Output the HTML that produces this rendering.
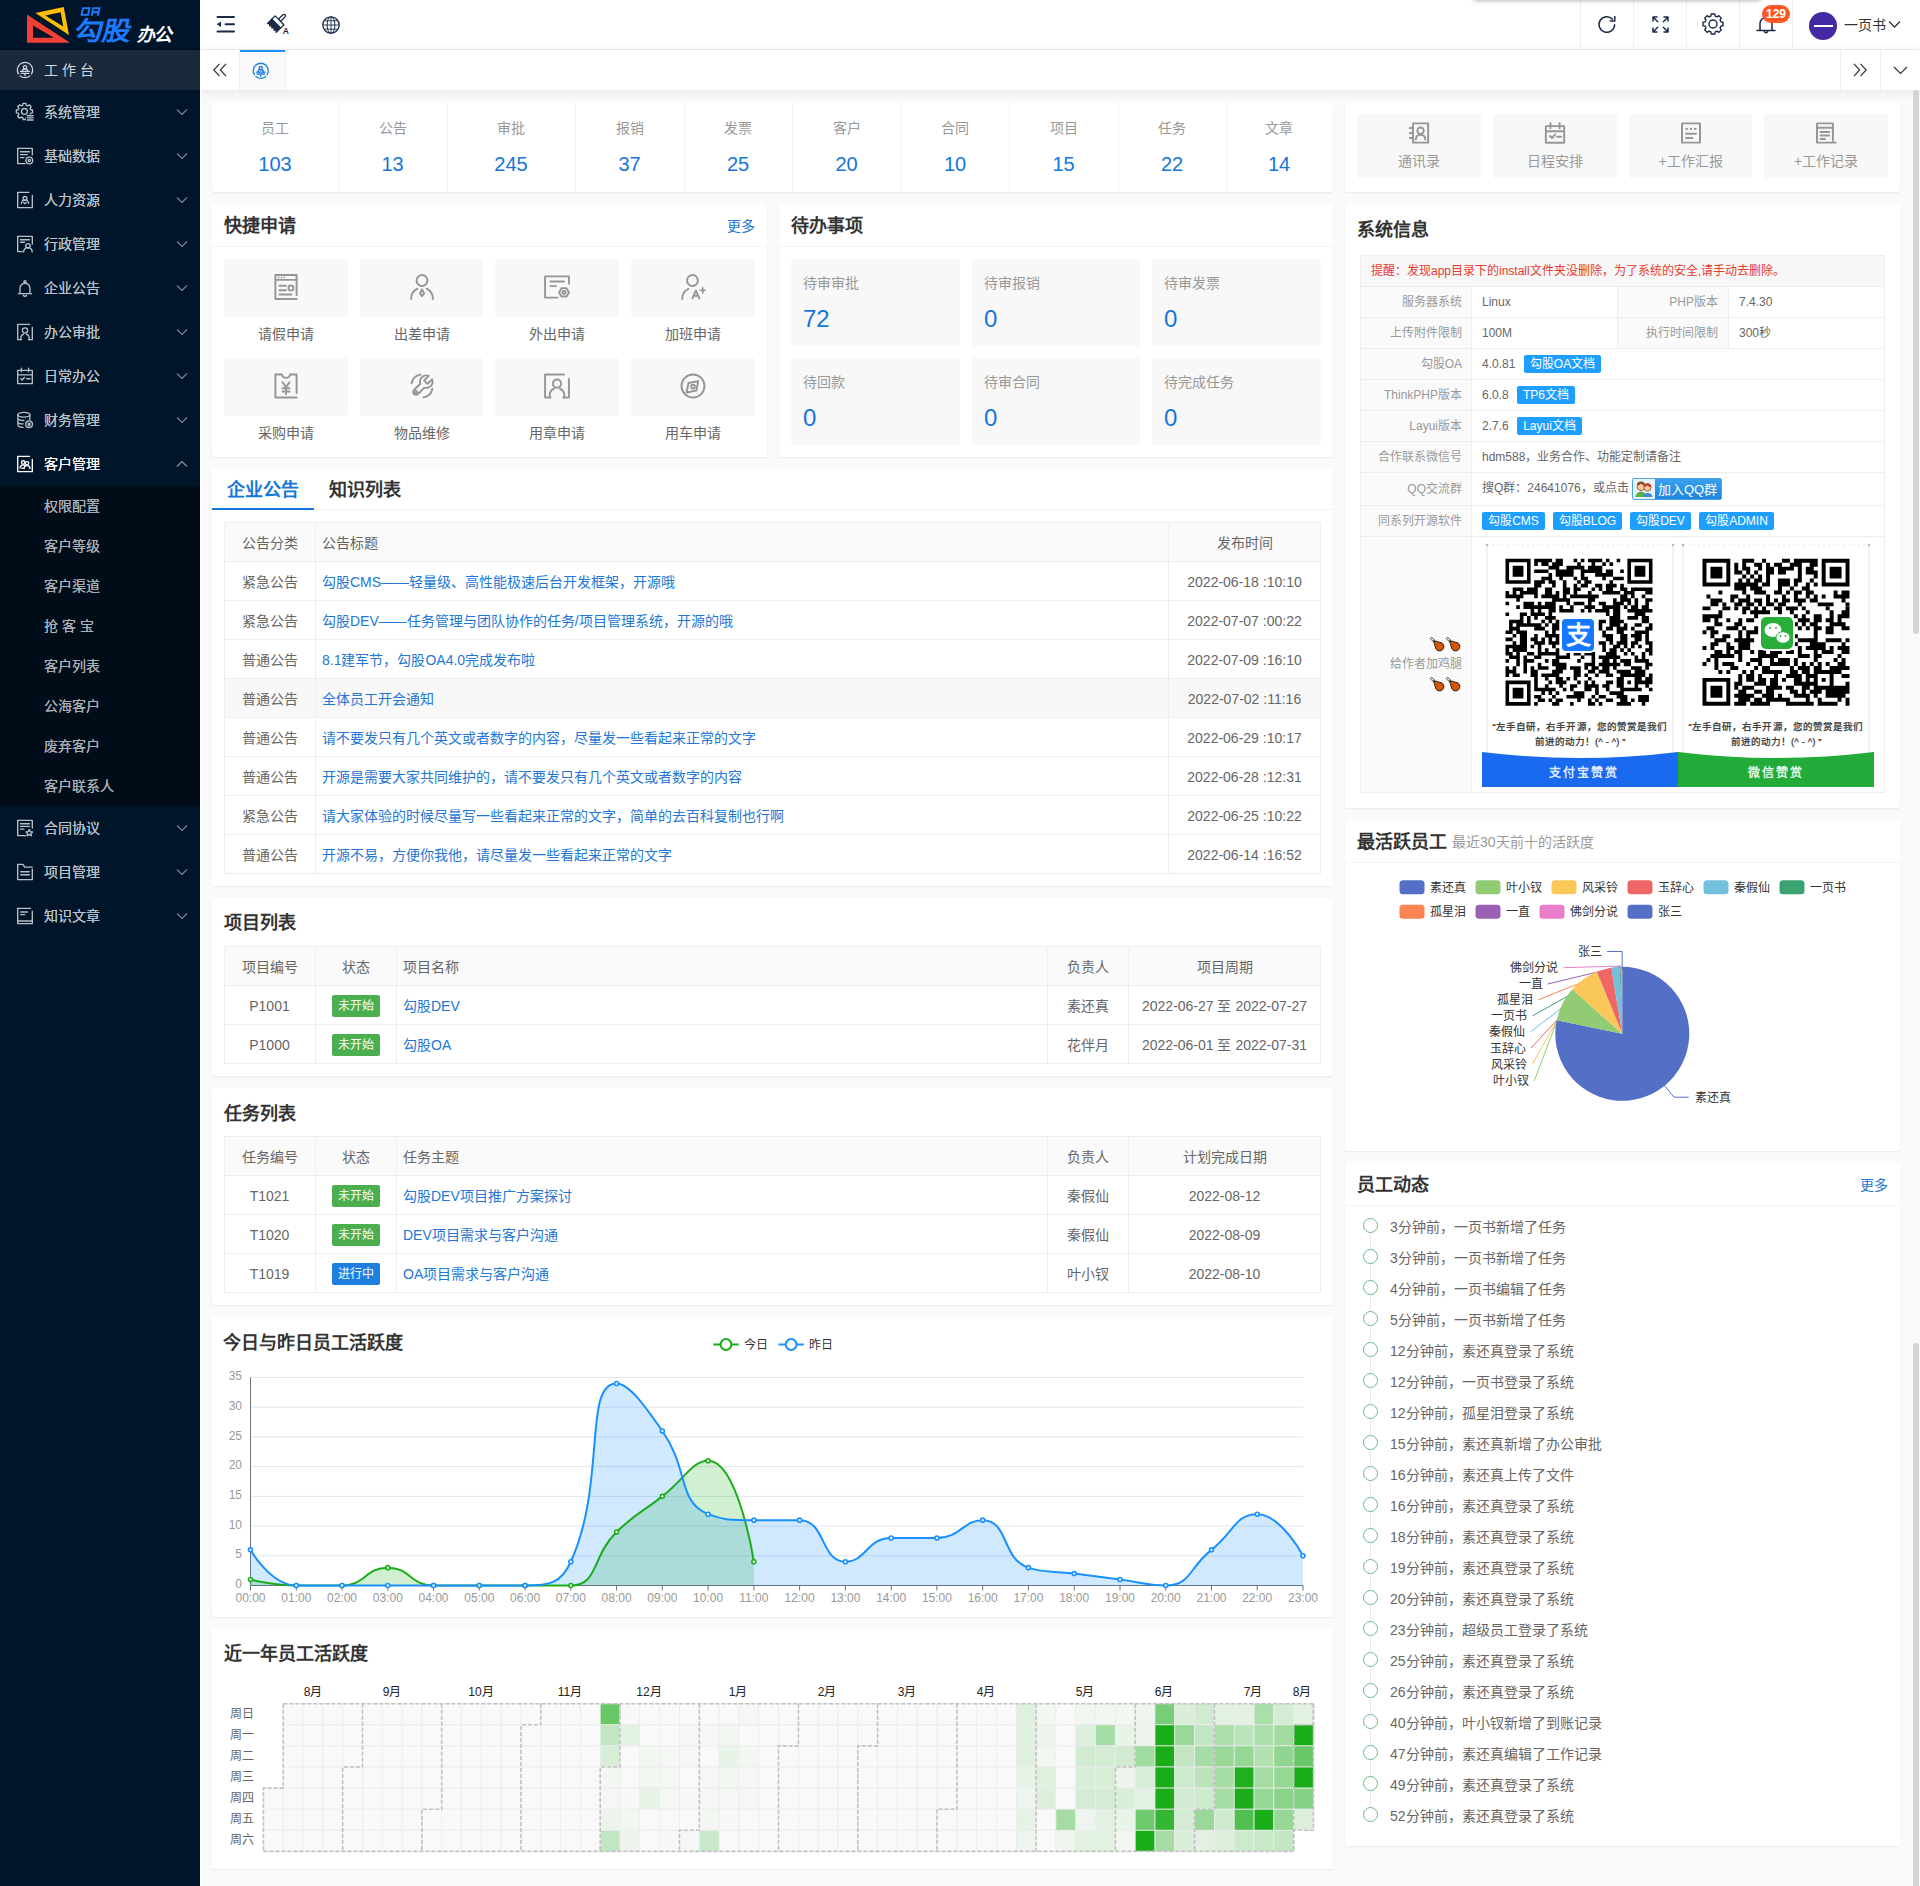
<!DOCTYPE html>
<html lang="zh-CN"><head><meta charset="utf-8"><title>勾股OA</title><style>
*{box-sizing:border-box;margin:0;padding:0}
html,body{width:1920px;height:1886px;overflow:hidden}
body{font-family:"Liberation Sans",sans-serif;font-size:14px;color:#666;background:#fafafa;position:relative}
.a{position:absolute}
.t{position:absolute;white-space:nowrap}
.card{position:absolute;background:#fff;border-radius:2px;box-shadow:0 1px 2px 0 rgba(0,0,30,.07)}
svg{position:absolute;overflow:visible}
.tb{position:absolute;border:1px solid #eee;background:#fff}
.hl{position:absolute;height:1px;background:#eee}
.vl{position:absolute;width:1px;background:#eee}
.badge{position:absolute;color:#fff;font-size:12px;border-radius:2px;text-align:center;white-space:nowrap}
</style></head><body>
<div class="a" style="left:0px;top:0px;width:200px;height:1886px;background:#001529;"></div>
<svg style="left:0;top:0" width="200" height="50" viewBox="0 0 200 50">
<path d="M27 14.600V42.700H70Z M33 25.500L54 37.700H33Z" fill="#f04134" fill-rule="evenodd"/>
<path d="M35.400 13L63.700 7L69 35Z M45.300 15.600L60.700 12.300L63.200 26.500Z" fill="#ffbf00" fill-rule="evenodd"/>
</svg>
<svg style="left:0;top:0" width="200" height="50" viewBox="0 0 200 50" fill="none" stroke="#1e7bff" stroke-width="1.900"><g transform="skewX(-12)"><path d="M84.800 8.100h6.400v6.800h-6.400z"/><path d="M95 15.800v-7.700h6.200v7.700M95 12.300h6.200"/></g></svg>
<div class="t" style="left:75px;top:15px;font-size:26px;line-height:32px;color:#1e7bff;font-weight:bold;transform:skewX(-12deg) scaleX(1.1);transform-origin:left center;letter-spacing:-1px">勾股</div>
<div class="t" style="left:138px;top:24px;font-size:18px;line-height:22px;color:#fff;font-weight:bold;transform:skewX(-12deg);letter-spacing:-1px">办公</div>
<div class="a" style="left:0px;top:49px;width:200px;height:1px;background:rgba(0,0,0,.25);"></div>
<div class="a" style="left:0px;top:50px;width:200px;height:40px;background:#1a2a3c;"></div>
<svg style="left:16px;top:61px;color:#d0d5db" width="18" height="18" viewBox="0 0 16 16" fill="none" stroke="currentColor" stroke-width="1.1" stroke-linecap="round" stroke-linejoin="round" ><path d="M2.2 11.5A6.8 6.8 0 1 1 13.8 11.5"/><path d="M3.6 13.2A6.8 6.8 0 0 0 12.4 13.2"/><circle cx="8" cy="5.6" r="1.5"/><path d="M5.6 9.3a2.4 2.4 0 0 1 4.8 0"/><path d="M4 9.3h8M4.6 11h6.8M8 11v2"/></svg>
<div class="t" style="left:44px;top:59.0px;height:22px;line-height:22px;font-size:14px;color:#d3d8de;">工 作 台</div>
<svg style="left:16px;top:103px;color:#b9c0c9" width="18" height="18" viewBox="0 0 16 16" fill="none" stroke="currentColor" stroke-width="1.2" stroke-linecap="round" stroke-linejoin="round" ><path d="M12.99 5.98L14.69 6.24L14.69 8.76L12.99 9.02L12.46 10.31L13.47 11.70L11.70 13.47L10.31 12.46L9.02 12.99L8.76 14.69L6.24 14.69L5.98 12.99L4.69 12.46L3.30 13.47L1.53 11.70L2.54 10.31L2.01 9.02L0.31 8.76L0.31 6.24L2.01 5.98L2.54 4.69L1.53 3.30L3.30 1.53L4.69 2.54L5.98 2.01L6.24 0.31L8.76 0.31L9.02 2.01L10.31 2.54L11.70 1.53L13.47 3.30L12.46 4.69Z"/><rect x="8.700" y="10.100" width="8" height="7" fill="#001529" stroke="none"/><circle cx="7.500" cy="7.500" r="2.600"/><path d="M10 11.300h5.200M10 13.200h5.200M10 15.100h5.200"/></svg>
<div class="t" style="left:44px;top:101.0px;height:22px;line-height:22px;font-size:14px;color:#b9c0c9;text-shadow:0 0 .4px #b9c0c9;">系统管理</div>
<svg style="left:176px;top:108px" width="12" height="8" viewBox="0 0 12 8" fill="none" stroke="#7d8999" stroke-width="1.1"><path d="M1 1.500L6 6.500L11 1.500"/></svg>
<svg style="left:16px;top:147px;color:#b9c0c9" width="18" height="18" viewBox="0 0 16 16" fill="none" stroke="currentColor" stroke-width="1.2" stroke-linecap="round" stroke-linejoin="round" ><path d="M14.500 7V1.200h-13v13.600h6.500"/><path d="M4 4.200h8M4 6.800h6M4 9.400h3"/><circle cx="11.800" cy="12" r="3"/><circle cx="11.800" cy="12" r="1"/></svg>
<div class="t" style="left:44px;top:145.0px;height:22px;line-height:22px;font-size:14px;color:#b9c0c9;text-shadow:0 0 .4px #b9c0c9;">基础数据</div>
<svg style="left:176px;top:152px" width="12" height="8" viewBox="0 0 12 8" fill="none" stroke="#7d8999" stroke-width="1.1"><path d="M1 1.500L6 6.500L11 1.500"/></svg>
<svg style="left:16px;top:191px;color:#b9c0c9" width="18" height="18" viewBox="0 0 16 16" fill="none" stroke="currentColor" stroke-width="1.2" stroke-linecap="round" stroke-linejoin="round" ><path d="M11.500 1.200h-10v13.600h13V4"/><circle cx="8" cy="6.600" r="1.700"/><path d="M4.800 11.200a3.200 3.200 0 0 1 6.400 0M6.800 10.300l1.200 1 1.200-1"/></svg>
<div class="t" style="left:44px;top:189.0px;height:22px;line-height:22px;font-size:14px;color:#b9c0c9;text-shadow:0 0 .4px #b9c0c9;">人力资源</div>
<svg style="left:176px;top:196px" width="12" height="8" viewBox="0 0 12 8" fill="none" stroke="#7d8999" stroke-width="1.1"><path d="M1 1.500L6 6.500L11 1.500"/></svg>
<svg style="left:16px;top:235px;color:#b9c0c9" width="18" height="18" viewBox="0 0 16 16" fill="none" stroke="currentColor" stroke-width="1.2" stroke-linecap="round" stroke-linejoin="round" ><path d="M5.500 14.800h-4V1.200h13V8"/><path d="M4 4.200h8M4 6.400h3.500"/><circle cx="10.600" cy="9.600" r="2"/><path d="M6.800 15a3.800 3.800 0 0 1 7.600 0"/></svg>
<div class="t" style="left:44px;top:233.0px;height:22px;line-height:22px;font-size:14px;color:#b9c0c9;text-shadow:0 0 .4px #b9c0c9;">行政管理</div>
<svg style="left:176px;top:240px" width="12" height="8" viewBox="0 0 12 8" fill="none" stroke="#7d8999" stroke-width="1.1"><path d="M1 1.500L6 6.500L11 1.500"/></svg>
<svg style="left:16px;top:279px;color:#b9c0c9" width="18" height="18" viewBox="0 0 16 16" fill="none" stroke="currentColor" stroke-width="1.2" stroke-linecap="round" stroke-linejoin="round" ><path d="M2.200 13h11.600M3.600 13V8.200a4.400 4.400 0 0 1 8.800 0V13"/><circle cx="8" cy="2.400" r="1"/><path d="M6.600 14.400a1.500 1.500 0 0 0 2.800 0"/></svg>
<div class="t" style="left:44px;top:277.0px;height:22px;line-height:22px;font-size:14px;color:#b9c0c9;text-shadow:0 0 .4px #b9c0c9;">企业公告</div>
<svg style="left:176px;top:284px" width="12" height="8" viewBox="0 0 12 8" fill="none" stroke="#7d8999" stroke-width="1.1"><path d="M1 1.500L6 6.500L11 1.500"/></svg>
<svg style="left:16px;top:323px;color:#b9c0c9" width="18" height="18" viewBox="0 0 16 16" fill="none" stroke="currentColor" stroke-width="1.2" stroke-linecap="round" stroke-linejoin="round" ><path d="M14.500 4v10.800h-3.200M4.700 14.800h-3.200V1.200h10.500"/><circle cx="8" cy="6.600" r="2.300"/><path d="M4.600 14.800a3.500 3.500 0 0 1 2-4.800M11.400 14.800a3.500 3.500 0 0 0-2-4.800"/></svg>
<div class="t" style="left:44px;top:321.0px;height:22px;line-height:22px;font-size:14px;color:#b9c0c9;text-shadow:0 0 .4px #b9c0c9;">办公审批</div>
<svg style="left:176px;top:328px" width="12" height="8" viewBox="0 0 12 8" fill="none" stroke="#7d8999" stroke-width="1.1"><path d="M1 1.500L6 6.500L11 1.500"/></svg>
<svg style="left:16px;top:367px;color:#b9c0c9" width="18" height="18" viewBox="0 0 16 16" fill="none" stroke="currentColor" stroke-width="1.2" stroke-linecap="round" stroke-linejoin="round" ><path d="M1.500 3h13v11.800h-13zM1.500 7h13M4.800 1v3.200M11.200 1v3.200"/><path d="M4.200 10.400l1.300 1.200 2-2.200M9.500 10.400h3"/></svg>
<div class="t" style="left:44px;top:365.0px;height:22px;line-height:22px;font-size:14px;color:#b9c0c9;text-shadow:0 0 .4px #b9c0c9;">日常办公</div>
<svg style="left:176px;top:372px" width="12" height="8" viewBox="0 0 12 8" fill="none" stroke="#7d8999" stroke-width="1.1"><path d="M1 1.500L6 6.500L11 1.500"/></svg>
<svg style="left:16px;top:411px;color:#b9c0c9" width="18" height="18" viewBox="0 0 16 16" fill="none" stroke="currentColor" stroke-width="1.2" stroke-linecap="round" stroke-linejoin="round" ><ellipse cx="7" cy="3.300" rx="5.300" ry="2.100"/><path d="M1.700 3.300v9.200c0 1.100 2 2 4.600 2.100M12.300 3.300v4.200M1.700 6.400c0 1.100 2.300 2 5.300 2M1.700 9.500c0 1.100 2 2 4.600 2"/><circle cx="11.600" cy="11.800" r="3"/><path d="M10.600 10.600l1 1.200 1-1.200M11.600 11.800v1.600M10.600 12.400h2"/></svg>
<div class="t" style="left:44px;top:409.0px;height:22px;line-height:22px;font-size:14px;color:#b9c0c9;text-shadow:0 0 .4px #b9c0c9;">财务管理</div>
<svg style="left:176px;top:416px" width="12" height="8" viewBox="0 0 12 8" fill="none" stroke="#7d8999" stroke-width="1.1"><path d="M1 1.500L6 6.500L11 1.500"/></svg>
<svg style="left:16px;top:455px;color:#ffffff" width="18" height="18" viewBox="0 0 16 16" fill="none" stroke="currentColor" stroke-width="1.2" stroke-linecap="round" stroke-linejoin="round" ><path d="M12 1.200h-10.500v13.600h13V4"/><circle cx="6.400" cy="6.600" r="1.500"/><circle cx="9.800" cy="7.400" r="1.500"/><path d="M3.600 11.600a2.800 2.800 0 0 1 4.200-2.400M7.200 12a2.600 2.600 0 0 1 5.200 0M5 11.600h1.200"/></svg>
<div class="t" style="left:44px;top:453.0px;height:22px;line-height:22px;font-size:14px;color:#ffffff;text-shadow:0 0 .4px #ffffff;">客户管理</div>
<svg style="left:176px;top:460px" width="12" height="8" viewBox="0 0 12 8" fill="none" stroke="#8a96a5" stroke-width="1.1"><path d="M1 6.500L6 1.500L11 6.500"/></svg>
<svg style="left:16px;top:819px;color:#b9c0c9" width="18" height="18" viewBox="0 0 16 16" fill="none" stroke="currentColor" stroke-width="1.2" stroke-linecap="round" stroke-linejoin="round" ><path d="M8.500 14.800h-7V1.200h13V8"/><path d="M4 4.200h8M4 6.600h8M4 9h3"/><path d="M11.800 9.400l.9 1.800 2 .3-1.450 1.400.35 2-1.800-.95-1.800.95.350-2-1.450-1.400 2-.3z"/></svg>
<div class="t" style="left:44px;top:817.0px;height:22px;line-height:22px;font-size:14px;color:#b9c0c9;text-shadow:0 0 .4px #b9c0c9;">合同协议</div>
<svg style="left:176px;top:824px" width="12" height="8" viewBox="0 0 12 8" fill="none" stroke="#7d8999" stroke-width="1.1"><path d="M1 1.500L6 6.500L11 1.500"/></svg>
<svg style="left:16px;top:863px;color:#b9c0c9" width="18" height="18" viewBox="0 0 16 16" fill="none" stroke="currentColor" stroke-width="1.2" stroke-linecap="round" stroke-linejoin="round" ><path d="M14.500 5.400v9.400h-13V1.200h4.600l1.700 2.400h6.700"/><path d="M4.200 7.800h7.600M4.200 10.400h7.600"/></svg>
<div class="t" style="left:44px;top:861.0px;height:22px;line-height:22px;font-size:14px;color:#b9c0c9;text-shadow:0 0 .4px #b9c0c9;">项目管理</div>
<svg style="left:176px;top:868px" width="12" height="8" viewBox="0 0 12 8" fill="none" stroke="#7d8999" stroke-width="1.1"><path d="M1 1.500L6 6.500L11 1.500"/></svg>
<svg style="left:16px;top:907px;color:#b9c0c9" width="18" height="18" viewBox="0 0 16 16" fill="none" stroke="currentColor" stroke-width="1.2" stroke-linecap="round" stroke-linejoin="round" ><path d="M14.500 3.800v11h-13V1.200h11.500"/><path d="M4.200 4.400h6M4.200 6.800h3.500M1.500 12.400h13"/></svg>
<div class="t" style="left:44px;top:905.0px;height:22px;line-height:22px;font-size:14px;color:#b9c0c9;text-shadow:0 0 .4px #b9c0c9;">知识文章</div>
<svg style="left:176px;top:912px" width="12" height="8" viewBox="0 0 12 8" fill="none" stroke="#7d8999" stroke-width="1.1"><path d="M1 1.500L6 6.500L11 1.500"/></svg>
<div class="a" style="left:0px;top:486px;width:200px;height:320px;background:#000c17;"></div>
<div class="t" style="left:44px;top:495.0px;height:22px;line-height:22px;font-size:14px;color:#a9b0b9;text-shadow:0 0 .6px #a9b0b9;">权限配置</div>
<div class="t" style="left:44px;top:535.0px;height:22px;line-height:22px;font-size:14px;color:#a9b0b9;text-shadow:0 0 .6px #a9b0b9;">客户等级</div>
<div class="t" style="left:44px;top:575.0px;height:22px;line-height:22px;font-size:14px;color:#a9b0b9;text-shadow:0 0 .6px #a9b0b9;">客户渠道</div>
<div class="t" style="left:44px;top:615.0px;height:22px;line-height:22px;font-size:14px;color:#a9b0b9;text-shadow:0 0 .6px #a9b0b9;">抢 客 宝</div>
<div class="t" style="left:44px;top:655.0px;height:22px;line-height:22px;font-size:14px;color:#a9b0b9;text-shadow:0 0 .6px #a9b0b9;">客户列表</div>
<div class="t" style="left:44px;top:695.0px;height:22px;line-height:22px;font-size:14px;color:#a9b0b9;text-shadow:0 0 .6px #a9b0b9;">公海客户</div>
<div class="t" style="left:44px;top:735.0px;height:22px;line-height:22px;font-size:14px;color:#a9b0b9;text-shadow:0 0 .6px #a9b0b9;">废弃客户</div>
<div class="t" style="left:44px;top:775.0px;height:22px;line-height:22px;font-size:14px;color:#a9b0b9;text-shadow:0 0 .6px #a9b0b9;">客户联系人</div>
<div class="a" style="left:200px;top:0px;width:1720px;height:50px;background:#fff;border-bottom:1px solid #eee;"></div>
<svg style="left:216px;top:15px" width="20" height="19" viewBox="0 0 20 19" fill="#1b2a47" stroke="none">
<rect x="0.500" y="1" width="18.500" height="2" rx="1"/><rect x="8.600" y="8.300" width="10.400" height="2" rx="1"/><rect x="0.500" y="15.400" width="18.500" height="2" rx="1"/><path d="M0.600 9.300L5 6.600V12Z"/></svg>
<svg style="left:0;top:0" width="300" height="50" viewBox="0 0 300 50" fill="none" stroke="#1b2a47" stroke-width="1.300" stroke-linejoin="round">
<g transform="translate(284.600,15.200) rotate(45)"><rect x="-1.500" y="-0.600" width="3" height="8" rx="1.500" fill="#fff"/><rect x="-6.200" y="7.200" width="12.400" height="4.800" fill="#fff"/><path d="M-6.200 12h12.400v6l-1.550-1.500-1.550 1.500-1.550-1.500-1.550 1.500-1.550-1.500-1.550 1.500-1.550-1.500-1.550 1.500z" fill="#1b2a47"/></g>
<text x="282.800" y="33.800" font-family="Liberation Sans, sans-serif" font-size="8.500" font-weight="bold" fill="#1b2a47" stroke="none">A</text></svg>
<svg style="left:322px;top:15.500px" width="18" height="18" viewBox="0 0 18 18" fill="none" stroke="#1b2a47" stroke-width="1">
<circle cx="9" cy="9" r="8.200" stroke-width="1.300"/><ellipse cx="9" cy="9" rx="3.900" ry="8.200"/><path d="M0.800 9h16.400M9 0.800v16.400M2.400 4.800h13.200M2.400 13.200h13.200" stroke-width=".9"/></svg>
<div class="vl" style="left:1580px;top:0;height:49px;background:#f0f0f0"></div>
<div class="vl" style="left:1633px;top:0;height:49px;background:#f0f0f0"></div>
<div class="vl" style="left:1686px;top:0;height:49px;background:#f0f0f0"></div>
<div class="vl" style="left:1739px;top:0;height:49px;background:#f0f0f0"></div>
<div class="vl" style="left:1792px;top:0;height:49px;background:#f0f0f0"></div>
<svg style="left:1597px;top:14px" width="20" height="20" viewBox="0 0 20 20" fill="none" stroke="#1b2a47" stroke-width="1.500" stroke-linecap="round" stroke-linejoin="round">
<path d="M17.600 10.800A7.800 7.800 0 1 1 15.400 5.100"/><path d="M17.800 2.400v4.600h-4.600"/></svg>
<svg style="left:1652px;top:16px" width="17" height="17" viewBox="0 0 17 17" fill="none" stroke="#1b2a47" stroke-width="1.500" stroke-linecap="round" stroke-linejoin="round">
<path d="M1 5V1h4M1.500 1.500l4.200 4.200M12 1h4v4M15.500 1.500l-4.200 4.200M1 12v4h4M1.500 15.500l4.200-4.200M16 12v4h-4M15.500 15.500l-4.200-4.200"/></svg>
<svg style="left:1702px;top:13.400px" width="22" height="22" viewBox="0 0 22 22" fill="none" stroke="#1b2a47" stroke-width="1.400" stroke-linejoin="round">
<path d="M18.81 8.84L21.05 9.25L21.05 12.75L18.81 13.16L18.05 14.99L19.35 16.87L16.87 19.35L14.99 18.05L13.16 18.81L12.75 21.05L9.25 21.05L8.84 18.81L7.01 18.05L5.13 19.35L2.65 16.87L3.95 14.99L3.19 13.16L0.95 12.75L0.95 9.25L3.19 8.84L3.95 7.01L2.65 5.13L5.13 2.65L7.01 3.95L8.84 3.19L9.25 0.95L12.75 0.95L13.16 3.19L14.99 3.95L16.87 2.65L19.35 5.13L18.05 7.01Z"/><circle cx="11" cy="11" r="4"/></svg>
<svg style="left:1756px;top:14px" width="20" height="21" viewBox="0 0 20 21" fill="none" stroke="#1b2a47" stroke-width="1.500" stroke-linecap="round">
<path d="M1 16.500h18M4 16.500V9.500a6 6 0 0 1 12 0V16.500"/><path d="M8.400 17.500a1.700 1.700 0 0 0 3.200 0"/></svg>
<div class="badge" style="left:1762px;top:5px;width:28px;height:18px;line-height:18px;background:#ff5722;border-radius:9px;font-weight:bold">129</div>
<div class="a" style="left:1809px;top:12px;width:28px;height:28px;border-radius:50%;background:#4528a4"></div>
<div class="a" style="left:1814px;top:25px;width:19px;height:1.6px;background:#fff;"></div>
<div class="t" style="left:1844px;top:13.5px;height:22px;line-height:22px;font-size:14px;color:#333;">一页书</div>
<svg style="left:1888px;top:20px" width="13" height="9" viewBox="0 0 13 9" fill="none" stroke="#333" stroke-width="1.300"><path d="M1 1.500L6.500 7L12 1.500"/></svg>
<div class="a" style="left:1474px;top:-21px;width:286px;height:20px;background:#fff;box-shadow:0 1px 5px rgba(0,0,0,.4)"></div>
<div class="a" style="left:200px;top:50px;width:1720px;height:40px;background:#fff;box-shadow:0 2px 9px rgba(0,0,0,.09);"></div>
<svg style="left:213px;top:63px" width="14" height="14" viewBox="0 0 14 14" fill="none" stroke="#333" stroke-width="1.200"><path d="M6.500 0.800L0.800 7L6.500 13.200M13 0.800L7.300 7L13 13.200"/></svg>
<div class="a" style="left:239px;top:50px;width:47px;height:40px;background:#fafafa;border-left:1px solid #eee;border-right:1px solid #eee;"></div>
<div class="a" style="left:240px;top:50px;width:45px;height:2px;background:#1890ff;"></div>
<svg style="left:252px;top:61.5px;color:#1e7fe0" width="17.5" height="17.5" viewBox="0 0 16 16" fill="none" stroke="currentColor" stroke-width="1.25" stroke-linecap="round" stroke-linejoin="round" ><path d="M2.2 11.5A6.8 6.8 0 1 1 13.8 11.5"/><path d="M3.6 13.2A6.8 6.8 0 0 0 12.4 13.2"/><circle cx="8" cy="5.6" r="1.5"/><path d="M5.6 9.3a2.4 2.4 0 0 1 4.8 0"/><path d="M4 9.3h8M4.6 11h6.8M8 11v2"/></svg>
<div class="vl" style="left:1840px;top:50px;height:40px;background:#eee"></div>
<div class="vl" style="left:1880px;top:50px;height:40px;background:#eee"></div>
<svg style="left:1853px;top:63px" width="14" height="14" viewBox="0 0 14 14" fill="none" stroke="#333" stroke-width="1.200"><path d="M1 0.800L6.700 7L1 13.200M7.500 0.800L13.200 7L7.500 13.200"/></svg>
<svg style="left:1893px;top:66px" width="15" height="9" viewBox="0 0 15 9" fill="none" stroke="#333" stroke-width="1.200"><path d="M1 1L7.500 7.500L14 1"/></svg>
<div class="a" style="left:200px;top:90px;width:1px;height:1796px;background:#fff;"></div>
<div class="a" style="left:1913px;top:90px;width:6px;height:544px;background:#d4d4d4;border-radius:3px;"></div>
<div class="a" style="left:1913px;top:1343px;width:6px;height:560px;background:#d4d4d4;border-radius:3px;"></div>
<div class="card" style="left:212px;top:102px;width:1121px;height:90px"></div>
<div class="t" style="left:212px;top:117.0px;height:22px;line-height:22px;font-size:14px;color:#999;width:126px;text-align:center;">员工</div>
<div class="t" style="left:212px;top:150.5px;height:26px;line-height:26px;font-size:20px;color:#1476d9;width:126px;text-align:center;">103</div>
<div class="vl" style="left:338px;top:102px;height:90px;background:#f2f2f2"></div>
<div class="t" style="left:338px;top:117.0px;height:22px;line-height:22px;font-size:14px;color:#999;width:109px;text-align:center;">公告</div>
<div class="t" style="left:338px;top:150.5px;height:26px;line-height:26px;font-size:20px;color:#1476d9;width:109px;text-align:center;">13</div>
<div class="vl" style="left:447px;top:102px;height:90px;background:#f2f2f2"></div>
<div class="t" style="left:447px;top:117.0px;height:22px;line-height:22px;font-size:14px;color:#999;width:128px;text-align:center;">审批</div>
<div class="t" style="left:447px;top:150.5px;height:26px;line-height:26px;font-size:20px;color:#1476d9;width:128px;text-align:center;">245</div>
<div class="vl" style="left:575px;top:102px;height:90px;background:#f2f2f2"></div>
<div class="t" style="left:575px;top:117.0px;height:22px;line-height:22px;font-size:14px;color:#999;width:109px;text-align:center;">报销</div>
<div class="t" style="left:575px;top:150.5px;height:26px;line-height:26px;font-size:20px;color:#1476d9;width:109px;text-align:center;">37</div>
<div class="vl" style="left:684px;top:102px;height:90px;background:#f2f2f2"></div>
<div class="t" style="left:684px;top:117.0px;height:22px;line-height:22px;font-size:14px;color:#999;width:108px;text-align:center;">发票</div>
<div class="t" style="left:684px;top:150.5px;height:26px;line-height:26px;font-size:20px;color:#1476d9;width:108px;text-align:center;">25</div>
<div class="vl" style="left:792px;top:102px;height:90px;background:#f2f2f2"></div>
<div class="t" style="left:792px;top:117.0px;height:22px;line-height:22px;font-size:14px;color:#999;width:109px;text-align:center;">客户</div>
<div class="t" style="left:792px;top:150.5px;height:26px;line-height:26px;font-size:20px;color:#1476d9;width:109px;text-align:center;">20</div>
<div class="vl" style="left:901px;top:102px;height:90px;background:#f2f2f2"></div>
<div class="t" style="left:901px;top:117.0px;height:22px;line-height:22px;font-size:14px;color:#999;width:108px;text-align:center;">合同</div>
<div class="t" style="left:901px;top:150.5px;height:26px;line-height:26px;font-size:20px;color:#1476d9;width:108px;text-align:center;">10</div>
<div class="vl" style="left:1009px;top:102px;height:90px;background:#f2f2f2"></div>
<div class="t" style="left:1009px;top:117.0px;height:22px;line-height:22px;font-size:14px;color:#999;width:109px;text-align:center;">项目</div>
<div class="t" style="left:1009px;top:150.5px;height:26px;line-height:26px;font-size:20px;color:#1476d9;width:109px;text-align:center;">15</div>
<div class="vl" style="left:1118px;top:102px;height:90px;background:#f2f2f2"></div>
<div class="t" style="left:1118px;top:117.0px;height:22px;line-height:22px;font-size:14px;color:#999;width:108px;text-align:center;">任务</div>
<div class="t" style="left:1118px;top:150.5px;height:26px;line-height:26px;font-size:20px;color:#1476d9;width:108px;text-align:center;">22</div>
<div class="vl" style="left:1226px;top:102px;height:90px;background:#f2f2f2"></div>
<div class="t" style="left:1226px;top:117.0px;height:22px;line-height:22px;font-size:14px;color:#999;width:106px;text-align:center;">文章</div>
<div class="t" style="left:1226px;top:150.5px;height:26px;line-height:26px;font-size:20px;color:#1476d9;width:106px;text-align:center;">14</div>
<div class="card" style="left:212px;top:204px;width:555px;height:253px"></div>
<div class="t" style="left:224px;top:213.0px;height:26px;line-height:26px;font-size:18px;color:#333;font-weight:bold;">快捷申请</div>
<div class="t" style="left:727px;top:215.0px;height:22px;line-height:22px;font-size:14px;color:#2277d6;">更多</div>
<div class="hl" style="left:212px;top:246px;width:555px;background:#f4f4f4"></div>
<div class="a" style="left:224px;top:259px;width:124px;height:58px;background:#f8f8f8;border-radius:2px;"></div>
<svg style="left:273.0px;top:274px;color:#999593" width="26" height="26" viewBox="0 0 24 24" fill="none" stroke="currentColor" stroke-width="1.8" stroke-linecap="round" stroke-linejoin="round" ><path d="M21.800 19.500V1h-19.600v22h19.600"/><path d="M2.200 5.400h19.600"/><path d="M5 3.200h.4M7.600 3.200h.4M10.200 3.200h.4" stroke-width="1.300"/><path d="M6 10.800h6M6 15h6M6 19h11"/><circle cx="16.600" cy="13" r="2.300"/></svg>
<div class="t" style="left:224px;top:323.0px;height:22px;line-height:22px;font-size:14px;color:#666;width:124px;text-align:center;">请假申请</div>
<div class="a" style="left:360px;top:259px;width:123px;height:58px;background:#f8f8f8;border-radius:2px;"></div>
<svg style="left:408.5px;top:274px;color:#999593" width="26" height="26" viewBox="0 0 24 24" fill="none" stroke="currentColor" stroke-width="1.8" stroke-linecap="round" stroke-linejoin="round" ><circle cx="12" cy="6" r="5"/><path d="M1.900 23a10.500 10.500 0 0 1 5.800-9.400M22.100 23a10.500 10.500 0 0 0-5.800-9.400"/><path d="M12 14.200l1.900 3.800-1.900 2.400-1.900-2.400z"/></svg>
<div class="t" style="left:360px;top:323.0px;height:22px;line-height:22px;font-size:14px;color:#666;width:123px;text-align:center;">出差申请</div>
<div class="a" style="left:495px;top:259px;width:124px;height:58px;background:#f8f8f8;border-radius:2px;"></div>
<svg style="left:544.0px;top:274px;color:#999593" width="26" height="26" viewBox="0 0 24 24" fill="none" stroke="currentColor" stroke-width="1.8" stroke-linecap="round" stroke-linejoin="round" ><path d="M23 9V2.200h-22v19.600h11.500"/><path d="M6 7h12.500M6 11.200h5"/><path d="M16.200 13.200h4.600l2.300 3.800-2.300 3.800h-4.600l-2.300-3.800z"/><circle cx="18.500" cy="17" r="1.400"/></svg>
<div class="t" style="left:495px;top:323.0px;height:22px;line-height:22px;font-size:14px;color:#666;width:124px;text-align:center;">外出申请</div>
<div class="a" style="left:631px;top:259px;width:124px;height:58px;background:#f8f8f8;border-radius:2px;"></div>
<svg style="left:680.0px;top:274px;color:#999593" width="26" height="26" viewBox="0 0 24 24" fill="none" stroke="currentColor" stroke-width="1.8" stroke-linecap="round" stroke-linejoin="round" ><circle cx="11.500" cy="6" r="5"/><path d="M2 23a10 10 0 0 1 5.800-9.200"/><path d="M11.500 22.500l3.200-7.200 3.200 7.200M12.600 20.200h4.200" stroke-width="1.800"/><path d="M21 12.800v4.400M18.800 15h4.400" stroke-width="1.600"/></svg>
<div class="t" style="left:631px;top:323.0px;height:22px;line-height:22px;font-size:14px;color:#666;width:124px;text-align:center;">加班申请</div>
<div class="a" style="left:224px;top:358px;width:124px;height:58px;background:#f8f8f8;border-radius:2px;"></div>
<svg style="left:273.0px;top:373px;color:#999593" width="26" height="26" viewBox="0 0 24 24" fill="none" stroke="currentColor" stroke-width="1.8" stroke-linecap="round" stroke-linejoin="round" ><path d="M21.800 18.500V1.300h-6M8.200 1.300h-6v21.400h19.600"/><path d="M8.200 1.500a3.900 3.900 0 0 0 7.600 0"/><path d="M8.800 8.600l3.200 4.400 3.200-4.400M12 13v6.500M8.800 14h6.400M8.800 17h6.400"/></svg>
<div class="t" style="left:224px;top:422.0px;height:22px;line-height:22px;font-size:14px;color:#666;width:124px;text-align:center;">采购申请</div>
<div class="a" style="left:360px;top:358px;width:123px;height:58px;background:#f8f8f8;border-radius:2px;"></div>
<svg style="left:408.5px;top:373px;color:#999593" width="26" height="26" viewBox="0 0 24 24" fill="none" stroke="currentColor" stroke-width="1.8" stroke-linecap="round" stroke-linejoin="round" ><path d="M2.400 9.500a10.200 10.200 0 0 1 8.300-8M21.600 14.500a10.200 10.200 0 0 1-8.300 8"/><path d="M21.300 5.800A5.800 5.800 0 0 1 14.100 13.500L8.300 19.400A2.600 2.600 0 0 1 4.600 15.700L10.500 9.900A5.800 5.800 0 0 1 18.200 2.700L14 6.900L17.100 10Z"/><circle cx="6.500" cy="17.500" r=".9"/></svg>
<div class="t" style="left:360px;top:422.0px;height:22px;line-height:22px;font-size:14px;color:#666;width:123px;text-align:center;">物品维修</div>
<div class="a" style="left:495px;top:358px;width:124px;height:58px;background:#f8f8f8;border-radius:2px;"></div>
<svg style="left:544.0px;top:373px;color:#999593" width="26" height="26" viewBox="0 0 24 24" fill="none" stroke="currentColor" stroke-width="1.8" stroke-linecap="round" stroke-linejoin="round" ><path d="M23 5.500v17.200h-4.800M5.800 22.700h-4.800v-21.400h17.500"/><circle cx="12" cy="9.800" r="3.800"/><path d="M5.800 22.700a6 6 0 0 1 3.400-8.200M18.200 22.700a6 6 0 0 0-3.400-8.200"/></svg>
<div class="t" style="left:495px;top:422.0px;height:22px;line-height:22px;font-size:14px;color:#666;width:124px;text-align:center;">用章申请</div>
<div class="a" style="left:631px;top:358px;width:124px;height:58px;background:#f8f8f8;border-radius:2px;"></div>
<svg style="left:680.0px;top:373px;color:#999593" width="26" height="26" viewBox="0 0 24 24" fill="none" stroke="currentColor" stroke-width="1.8" stroke-linecap="round" stroke-linejoin="round" ><circle cx="12" cy="12" r="10.600"/><path d="M7.800 9.200l9-1.700-1.700 8.800-9 1.700z"/><circle cx="12" cy="12.600" r="1.700"/></svg>
<div class="t" style="left:631px;top:422.0px;height:22px;line-height:22px;font-size:14px;color:#666;width:124px;text-align:center;">用车申请</div>
<div class="card" style="left:779px;top:204px;width:554px;height:253px"></div>
<div class="t" style="left:791px;top:213.0px;height:26px;line-height:26px;font-size:18px;color:#333;font-weight:bold;">待办事项</div>
<div class="hl" style="left:779px;top:246px;width:553px;background:#f4f4f4"></div>
<div class="a" style="left:791px;top:259px;width:169px;height:87px;background:#f8f8f8;border-radius:2px;"></div>
<div class="t" style="left:803px;top:272.0px;height:22px;line-height:22px;font-size:14px;color:#999;">待审审批</div>
<div class="t" style="left:803px;top:303.5px;height:30px;line-height:30px;font-size:24px;color:#1476d9;">72</div>
<div class="a" style="left:972px;top:259px;width:168px;height:87px;background:#f8f8f8;border-radius:2px;"></div>
<div class="t" style="left:984px;top:272.0px;height:22px;line-height:22px;font-size:14px;color:#999;">待审报销</div>
<div class="t" style="left:984px;top:303.5px;height:30px;line-height:30px;font-size:24px;color:#1476d9;">0</div>
<div class="a" style="left:1152px;top:259px;width:169px;height:87px;background:#f8f8f8;border-radius:2px;"></div>
<div class="t" style="left:1164px;top:272.0px;height:22px;line-height:22px;font-size:14px;color:#999;">待审发票</div>
<div class="t" style="left:1164px;top:303.5px;height:30px;line-height:30px;font-size:24px;color:#1476d9;">0</div>
<div class="a" style="left:791px;top:358px;width:169px;height:87px;background:#f8f8f8;border-radius:2px;"></div>
<div class="t" style="left:803px;top:371.0px;height:22px;line-height:22px;font-size:14px;color:#999;">待回款</div>
<div class="t" style="left:803px;top:402.5px;height:30px;line-height:30px;font-size:24px;color:#1476d9;">0</div>
<div class="a" style="left:972px;top:358px;width:168px;height:87px;background:#f8f8f8;border-radius:2px;"></div>
<div class="t" style="left:984px;top:371.0px;height:22px;line-height:22px;font-size:14px;color:#999;">待审合同</div>
<div class="t" style="left:984px;top:402.5px;height:30px;line-height:30px;font-size:24px;color:#1476d9;">0</div>
<div class="a" style="left:1152px;top:358px;width:169px;height:87px;background:#f8f8f8;border-radius:2px;"></div>
<div class="t" style="left:1164px;top:371.0px;height:22px;line-height:22px;font-size:14px;color:#999;">待完成任务</div>
<div class="t" style="left:1164px;top:402.5px;height:30px;line-height:30px;font-size:24px;color:#1476d9;">0</div>
<div class="card" style="left:212px;top:469px;width:1121px;height:417px"></div>
<div class="t" style="left:227px;top:477.0px;height:26px;line-height:26px;font-size:18px;color:#1476d9;font-weight:bold;">企业公告</div>
<div class="t" style="left:329px;top:477.0px;height:26px;line-height:26px;font-size:18px;color:#333;font-weight:bold;">知识列表</div>
<div class="hl" style="left:212px;top:509px;width:1120px;background:#f2f2f2"></div>
<div class="a" style="left:212px;top:508px;width:102px;height:2px;background:#1476d9;"></div>
<div class="tb" style="left:224px;top:522px;width:1097px;height:352px"></div>
<div class="a" style="left:225px;top:523px;width:1095px;height:38px;background:#fafafa;"></div>
<div class="a" style="left:225px;top:679px;width:1095px;height:38px;background:#f8f8f8;"></div>
<div class="hl" style="left:224px;top:561px;width:1097px"></div>
<div class="hl" style="left:224px;top:600px;width:1097px"></div>
<div class="hl" style="left:224px;top:639px;width:1097px"></div>
<div class="hl" style="left:224px;top:678px;width:1097px"></div>
<div class="hl" style="left:224px;top:717px;width:1097px"></div>
<div class="hl" style="left:224px;top:756px;width:1097px"></div>
<div class="hl" style="left:224px;top:795px;width:1097px"></div>
<div class="hl" style="left:224px;top:834px;width:1097px"></div>
<div class="vl" style="left:315px;top:522px;height:352px"></div>
<div class="vl" style="left:1168px;top:522px;height:352px"></div>
<div class="t" style="left:224px;top:531.8px;height:22px;line-height:22px;font-size:14px;color:#666;width:91px;text-align:center;">公告分类</div>
<div class="t" style="left:322px;top:531.8px;height:22px;line-height:22px;font-size:14px;color:#666;">公告标题</div>
<div class="t" style="left:1168px;top:531.8px;height:22px;line-height:22px;font-size:14px;color:#666;width:153px;text-align:center;">发布时间</div>
<div class="t" style="left:224px;top:570.8px;height:22px;line-height:22px;font-size:14px;color:#666;width:91px;text-align:center;">紧急公告</div>
<div class="t" style="left:322px;top:570.8px;height:22px;line-height:22px;font-size:14px;color:#2277d6;">勾股CMS——轻量级、高性能极速后台开发框架，开源哦</div>
<div class="t" style="left:1168px;top:570.8px;height:22px;line-height:22px;font-size:14px;color:#666;width:153px;text-align:center;">2022-06-18 :10:10</div>
<div class="t" style="left:224px;top:609.8px;height:22px;line-height:22px;font-size:14px;color:#666;width:91px;text-align:center;">紧急公告</div>
<div class="t" style="left:322px;top:609.8px;height:22px;line-height:22px;font-size:14px;color:#2277d6;">勾股DEV——任务管理与团队协作的任务/项目管理系统，开源的哦</div>
<div class="t" style="left:1168px;top:609.8px;height:22px;line-height:22px;font-size:14px;color:#666;width:153px;text-align:center;">2022-07-07 :00:22</div>
<div class="t" style="left:224px;top:648.8px;height:22px;line-height:22px;font-size:14px;color:#666;width:91px;text-align:center;">普通公告</div>
<div class="t" style="left:322px;top:648.8px;height:22px;line-height:22px;font-size:14px;color:#2277d6;">8.1建军节，勾股OA4.0完成发布啦</div>
<div class="t" style="left:1168px;top:648.8px;height:22px;line-height:22px;font-size:14px;color:#666;width:153px;text-align:center;">2022-07-09 :16:10</div>
<div class="t" style="left:224px;top:687.8px;height:22px;line-height:22px;font-size:14px;color:#666;width:91px;text-align:center;">普通公告</div>
<div class="t" style="left:322px;top:687.8px;height:22px;line-height:22px;font-size:14px;color:#2277d6;">全体员工开会通知</div>
<div class="t" style="left:1168px;top:687.8px;height:22px;line-height:22px;font-size:14px;color:#666;width:153px;text-align:center;">2022-07-02 :11:16</div>
<div class="t" style="left:224px;top:726.8px;height:22px;line-height:22px;font-size:14px;color:#666;width:91px;text-align:center;">普通公告</div>
<div class="t" style="left:322px;top:726.8px;height:22px;line-height:22px;font-size:14px;color:#2277d6;">请不要发只有几个英文或者数字的内容，尽量发一些看起来正常的文字</div>
<div class="t" style="left:1168px;top:726.8px;height:22px;line-height:22px;font-size:14px;color:#666;width:153px;text-align:center;">2022-06-29 :10:17</div>
<div class="t" style="left:224px;top:765.8px;height:22px;line-height:22px;font-size:14px;color:#666;width:91px;text-align:center;">普通公告</div>
<div class="t" style="left:322px;top:765.8px;height:22px;line-height:22px;font-size:14px;color:#2277d6;">开源是需要大家共同维护的，请不要发只有几个英文或者数字的内容</div>
<div class="t" style="left:1168px;top:765.8px;height:22px;line-height:22px;font-size:14px;color:#666;width:153px;text-align:center;">2022-06-28 :12:31</div>
<div class="t" style="left:224px;top:804.8px;height:22px;line-height:22px;font-size:14px;color:#666;width:91px;text-align:center;">紧急公告</div>
<div class="t" style="left:322px;top:804.8px;height:22px;line-height:22px;font-size:14px;color:#2277d6;">请大家体验的时候尽量写一些看起来正常的文字，简单的去百科复制也行啊</div>
<div class="t" style="left:1168px;top:804.8px;height:22px;line-height:22px;font-size:14px;color:#666;width:153px;text-align:center;">2022-06-25 :10:22</div>
<div class="t" style="left:224px;top:843.8px;height:22px;line-height:22px;font-size:14px;color:#666;width:91px;text-align:center;">普通公告</div>
<div class="t" style="left:322px;top:843.8px;height:22px;line-height:22px;font-size:14px;color:#2277d6;">开源不易，方便你我他，请尽量发一些看起来正常的文字</div>
<div class="t" style="left:1168px;top:843.8px;height:22px;line-height:22px;font-size:14px;color:#666;width:153px;text-align:center;">2022-06-14 :16:52</div>
<div class="card" style="left:212px;top:898px;width:1121px;height:178px"></div>
<div class="t" style="left:224px;top:910.0px;height:26px;line-height:26px;font-size:18px;color:#333;font-weight:bold;">项目列表</div>
<div class="tb" style="left:224px;top:946px;width:1097px;height:118px"></div>
<div class="a" style="left:225px;top:947px;width:1095px;height:38px;background:#fafafa;"></div>
<div class="hl" style="left:224px;top:985px;width:1097px"></div>
<div class="hl" style="left:224px;top:1024px;width:1097px"></div>
<div class="vl" style="left:315px;top:946px;height:118px"></div>
<div class="vl" style="left:396px;top:946px;height:118px"></div>
<div class="vl" style="left:1047px;top:946px;height:118px"></div>
<div class="vl" style="left:1128px;top:946px;height:118px"></div>
<div class="t" style="left:224px;top:955.8px;height:22px;line-height:22px;font-size:14px;color:#666;width:91px;text-align:center;">项目编号</div>
<div class="t" style="left:315px;top:955.8px;height:22px;line-height:22px;font-size:14px;color:#666;width:81px;text-align:center;">状态</div>
<div class="t" style="left:403px;top:955.8px;height:22px;line-height:22px;font-size:14px;color:#666;">项目名称</div>
<div class="t" style="left:1047px;top:955.8px;height:22px;line-height:22px;font-size:14px;color:#666;width:81px;text-align:center;">负责人</div>
<div class="t" style="left:1128px;top:955.8px;height:22px;line-height:22px;font-size:14px;color:#666;width:193px;text-align:center;">项目周期</div>
<div class="t" style="left:224px;top:994.8px;height:22px;line-height:22px;font-size:14px;color:#666;width:91px;text-align:center;">P1001</div>
<div class="badge" style="left:332.0px;top:994.8px;width:48px;height:22px;line-height:22px;background:#4bae4f">未开始</div>
<div class="t" style="left:403px;top:994.8px;height:22px;line-height:22px;font-size:14px;color:#2277d6;">勾股DEV</div>
<div class="t" style="left:1047px;top:994.8px;height:22px;line-height:22px;font-size:14px;color:#666;width:81px;text-align:center;">素还真</div>
<div class="t" style="left:1128px;top:994.8px;height:22px;line-height:22px;font-size:14px;color:#666;width:193px;text-align:center;">2022-06-27 至 2022-07-27</div>
<div class="t" style="left:224px;top:1033.8px;height:22px;line-height:22px;font-size:14px;color:#666;width:91px;text-align:center;">P1000</div>
<div class="badge" style="left:332.0px;top:1033.8px;width:48px;height:22px;line-height:22px;background:#4bae4f">未开始</div>
<div class="t" style="left:403px;top:1033.8px;height:22px;line-height:22px;font-size:14px;color:#2277d6;">勾股OA</div>
<div class="t" style="left:1047px;top:1033.8px;height:22px;line-height:22px;font-size:14px;color:#666;width:81px;text-align:center;">花伴月</div>
<div class="t" style="left:1128px;top:1033.8px;height:22px;line-height:22px;font-size:14px;color:#666;width:193px;text-align:center;">2022-06-01 至 2022-07-31</div>
<div class="card" style="left:212px;top:1088px;width:1121px;height:217px"></div>
<div class="t" style="left:224px;top:1101.0px;height:26px;line-height:26px;font-size:18px;color:#333;font-weight:bold;">任务列表</div>
<div class="tb" style="left:224px;top:1136px;width:1097px;height:157px"></div>
<div class="a" style="left:225px;top:1137px;width:1095px;height:38px;background:#fafafa;"></div>
<div class="hl" style="left:224px;top:1175px;width:1097px"></div>
<div class="hl" style="left:224px;top:1214px;width:1097px"></div>
<div class="hl" style="left:224px;top:1253px;width:1097px"></div>
<div class="vl" style="left:315px;top:1136px;height:157px"></div>
<div class="vl" style="left:396px;top:1136px;height:157px"></div>
<div class="vl" style="left:1047px;top:1136px;height:157px"></div>
<div class="vl" style="left:1128px;top:1136px;height:157px"></div>
<div class="t" style="left:224px;top:1145.8px;height:22px;line-height:22px;font-size:14px;color:#666;width:91px;text-align:center;">任务编号</div>
<div class="t" style="left:315px;top:1145.8px;height:22px;line-height:22px;font-size:14px;color:#666;width:81px;text-align:center;">状态</div>
<div class="t" style="left:403px;top:1145.8px;height:22px;line-height:22px;font-size:14px;color:#666;">任务主题</div>
<div class="t" style="left:1047px;top:1145.8px;height:22px;line-height:22px;font-size:14px;color:#666;width:81px;text-align:center;">负责人</div>
<div class="t" style="left:1128px;top:1145.8px;height:22px;line-height:22px;font-size:14px;color:#666;width:193px;text-align:center;">计划完成日期</div>
<div class="t" style="left:224px;top:1184.8px;height:22px;line-height:22px;font-size:14px;color:#666;width:91px;text-align:center;">T1021</div>
<div class="badge" style="left:332.0px;top:1184.8px;width:48px;height:22px;line-height:22px;background:#4bae4f">未开始</div>
<div class="t" style="left:403px;top:1184.8px;height:22px;line-height:22px;font-size:14px;color:#2277d6;">勾股DEV项目推广方案探讨</div>
<div class="t" style="left:1047px;top:1184.8px;height:22px;line-height:22px;font-size:14px;color:#666;width:81px;text-align:center;">秦假仙</div>
<div class="t" style="left:1128px;top:1184.8px;height:22px;line-height:22px;font-size:14px;color:#666;width:193px;text-align:center;">2022-08-12</div>
<div class="t" style="left:224px;top:1223.8px;height:22px;line-height:22px;font-size:14px;color:#666;width:91px;text-align:center;">T1020</div>
<div class="badge" style="left:332.0px;top:1223.8px;width:48px;height:22px;line-height:22px;background:#4bae4f">未开始</div>
<div class="t" style="left:403px;top:1223.8px;height:22px;line-height:22px;font-size:14px;color:#2277d6;">DEV项目需求与客户沟通</div>
<div class="t" style="left:1047px;top:1223.8px;height:22px;line-height:22px;font-size:14px;color:#666;width:81px;text-align:center;">秦假仙</div>
<div class="t" style="left:1128px;top:1223.8px;height:22px;line-height:22px;font-size:14px;color:#666;width:193px;text-align:center;">2022-08-09</div>
<div class="t" style="left:224px;top:1262.8px;height:22px;line-height:22px;font-size:14px;color:#666;width:91px;text-align:center;">T1019</div>
<div class="badge" style="left:332.0px;top:1262.8px;width:48px;height:22px;line-height:22px;background:#1e7fe0">进行中</div>
<div class="t" style="left:403px;top:1262.8px;height:22px;line-height:22px;font-size:14px;color:#2277d6;">OA项目需求与客户沟通</div>
<div class="t" style="left:1047px;top:1262.8px;height:22px;line-height:22px;font-size:14px;color:#666;width:81px;text-align:center;">叶小钗</div>
<div class="t" style="left:1128px;top:1262.8px;height:22px;line-height:22px;font-size:14px;color:#666;width:193px;text-align:center;">2022-08-10</div>
<div class="card" style="left:212px;top:1317px;width:1121px;height:300px"></div>
<div class="t" style="left:223px;top:1330.0px;height:26px;line-height:26px;font-size:18px;color:#333;font-weight:bold;">今日与昨日员工活跃度</div>
<svg style="left:0;top:0" width="1920" height="1886" viewBox="0 0 1920 1886" font-family="Liberation Sans, sans-serif"><path d="M250.5 1555.8H1303.0" stroke="#e0e6f1" stroke-width="1"/><path d="M250.5 1526.1H1303.0" stroke="#e0e6f1" stroke-width="1"/><path d="M250.5 1496.4H1303.0" stroke="#e0e6f1" stroke-width="1"/><path d="M250.5 1466.6H1303.0" stroke="#e0e6f1" stroke-width="1"/><path d="M250.5 1436.9H1303.0" stroke="#e0e6f1" stroke-width="1"/><path d="M250.5 1407.2H1303.0" stroke="#e0e6f1" stroke-width="1"/><path d="M250.5 1377.5H1303.0" stroke="#e0e6f1" stroke-width="1"/><text x="242" y="1588.1" font-size="12" fill="#999" text-anchor="end">0</text><text x="242" y="1558.4" font-size="12" fill="#999" text-anchor="end">5</text><text x="242" y="1528.7" font-size="12" fill="#999" text-anchor="end">10</text><text x="242" y="1499.0" font-size="12" fill="#999" text-anchor="end">15</text><text x="242" y="1469.2" font-size="12" fill="#999" text-anchor="end">20</text><text x="242" y="1439.5" font-size="12" fill="#999" text-anchor="end">25</text><text x="242" y="1409.8" font-size="12" fill="#999" text-anchor="end">30</text><text x="242" y="1380.1" font-size="12" fill="#999" text-anchor="end">35</text><path d="M250.5 1377.5V1585.5" stroke="#6e7079" stroke-width="1"/><path d="M250.5 1585.5H1303.0" stroke="#6e7079" stroke-width="1"/><path d="M250.5 1585.5v5" stroke="#6e7079" stroke-width="1"/><text x="250.5" y="1601.5" font-size="12" fill="#999" text-anchor="middle">00:00</text><path d="M296.3 1585.5v5" stroke="#6e7079" stroke-width="1"/><text x="296.3" y="1601.5" font-size="12" fill="#999" text-anchor="middle">01:00</text><path d="M342.0 1585.5v5" stroke="#6e7079" stroke-width="1"/><text x="342.0" y="1601.5" font-size="12" fill="#999" text-anchor="middle">02:00</text><path d="M387.8 1585.5v5" stroke="#6e7079" stroke-width="1"/><text x="387.8" y="1601.5" font-size="12" fill="#999" text-anchor="middle">03:00</text><path d="M433.5 1585.5v5" stroke="#6e7079" stroke-width="1"/><text x="433.5" y="1601.5" font-size="12" fill="#999" text-anchor="middle">04:00</text><path d="M479.3 1585.5v5" stroke="#6e7079" stroke-width="1"/><text x="479.3" y="1601.5" font-size="12" fill="#999" text-anchor="middle">05:00</text><path d="M525.1 1585.5v5" stroke="#6e7079" stroke-width="1"/><text x="525.1" y="1601.5" font-size="12" fill="#999" text-anchor="middle">06:00</text><path d="M570.8 1585.5v5" stroke="#6e7079" stroke-width="1"/><text x="570.8" y="1601.5" font-size="12" fill="#999" text-anchor="middle">07:00</text><path d="M616.6 1585.5v5" stroke="#6e7079" stroke-width="1"/><text x="616.6" y="1601.5" font-size="12" fill="#999" text-anchor="middle">08:00</text><path d="M662.3 1585.5v5" stroke="#6e7079" stroke-width="1"/><text x="662.3" y="1601.5" font-size="12" fill="#999" text-anchor="middle">09:00</text><path d="M708.1 1585.5v5" stroke="#6e7079" stroke-width="1"/><text x="708.1" y="1601.5" font-size="12" fill="#999" text-anchor="middle">10:00</text><path d="M753.9 1585.5v5" stroke="#6e7079" stroke-width="1"/><text x="753.9" y="1601.5" font-size="12" fill="#999" text-anchor="middle">11:00</text><path d="M799.6 1585.5v5" stroke="#6e7079" stroke-width="1"/><text x="799.6" y="1601.5" font-size="12" fill="#999" text-anchor="middle">12:00</text><path d="M845.4 1585.5v5" stroke="#6e7079" stroke-width="1"/><text x="845.4" y="1601.5" font-size="12" fill="#999" text-anchor="middle">13:00</text><path d="M891.2 1585.5v5" stroke="#6e7079" stroke-width="1"/><text x="891.2" y="1601.5" font-size="12" fill="#999" text-anchor="middle">14:00</text><path d="M936.9 1585.5v5" stroke="#6e7079" stroke-width="1"/><text x="936.9" y="1601.5" font-size="12" fill="#999" text-anchor="middle">15:00</text><path d="M982.7 1585.5v5" stroke="#6e7079" stroke-width="1"/><text x="982.7" y="1601.5" font-size="12" fill="#999" text-anchor="middle">16:00</text><path d="M1028.4 1585.5v5" stroke="#6e7079" stroke-width="1"/><text x="1028.4" y="1601.5" font-size="12" fill="#999" text-anchor="middle">17:00</text><path d="M1074.2 1585.5v5" stroke="#6e7079" stroke-width="1"/><text x="1074.2" y="1601.5" font-size="12" fill="#999" text-anchor="middle">18:00</text><path d="M1120.0 1585.5v5" stroke="#6e7079" stroke-width="1"/><text x="1120.0" y="1601.5" font-size="12" fill="#999" text-anchor="middle">19:00</text><path d="M1165.7 1585.5v5" stroke="#6e7079" stroke-width="1"/><text x="1165.7" y="1601.5" font-size="12" fill="#999" text-anchor="middle">20:00</text><path d="M1211.5 1585.5v5" stroke="#6e7079" stroke-width="1"/><text x="1211.5" y="1601.5" font-size="12" fill="#999" text-anchor="middle">21:00</text><path d="M1257.2 1585.5v5" stroke="#6e7079" stroke-width="1"/><text x="1257.2" y="1601.5" font-size="12" fill="#999" text-anchor="middle">22:00</text><path d="M1303.0 1585.5v5" stroke="#6e7079" stroke-width="1"/><text x="1303.0" y="1601.5" font-size="12" fill="#999" text-anchor="middle">23:00</text><path d="M250.50 1579.56C250.50 1579.56 273.28 1585.50 296.26 1585.50C319.05 1585.50 319.95 1585.50 342.02 1585.50C365.71 1585.50 364.90 1567.67 387.78 1567.67C410.66 1567.67 409.86 1585.50 433.54 1585.50C455.62 1585.50 456.42 1585.50 479.30 1585.50C502.18 1585.50 502.18 1585.50 525.07 1585.50C547.95 1585.50 552.80 1585.50 570.83 1585.50C598.56 1585.50 591.50 1556.45 616.59 1532.01C637.26 1511.88 639.47 1514.19 662.35 1496.36C685.23 1478.53 692.39 1460.70 708.11 1460.70C738.15 1460.70 753.87 1561.73 753.87 1561.73L753.87 1585.5L250.50 1585.5Z" fill="rgba(26,173,25,.2)"/><path d="M250.50 1549.84C250.50 1549.84 270.68 1585.50 296.26 1585.50C316.44 1585.50 319.14 1585.50 342.02 1585.50C364.90 1585.50 364.90 1585.50 387.78 1585.50C410.66 1585.50 410.66 1585.50 433.54 1585.50C456.42 1585.50 456.42 1585.50 479.30 1585.50C502.18 1585.50 503.55 1585.50 525.07 1585.50C549.31 1585.50 560.81 1583.84 570.83 1561.73C606.57 1482.81 582.90 1383.44 616.59 1383.44C628.66 1383.44 643.59 1404.18 662.35 1430.99C689.35 1469.55 677.31 1501.96 708.11 1514.19C723.07 1520.13 730.89 1520.13 753.87 1520.13C776.65 1520.13 780.17 1520.13 799.63 1520.13C825.93 1520.13 820.44 1561.73 845.39 1561.73C866.20 1561.73 866.91 1537.96 891.15 1537.96C912.67 1537.96 914.84 1537.96 936.91 1537.96C960.60 1537.96 963.15 1520.13 982.67 1520.13C1008.91 1520.13 1001.51 1559.17 1028.43 1567.67C1047.27 1573.61 1051.32 1570.64 1074.20 1573.61C1097.08 1576.59 1097.08 1576.59 1119.96 1579.56C1142.84 1582.53 1145.44 1585.50 1165.72 1585.50C1191.20 1585.50 1188.60 1567.67 1211.48 1549.84C1234.36 1532.01 1235.09 1514.19 1257.24 1514.19C1280.85 1514.19 1303.00 1555.79 1303.00 1555.79L1303.00 1585.5L250.50 1585.5Z" fill="rgba(24,144,255,.2)"/><path d="M250.50 1579.56C250.50 1579.56 273.28 1585.50 296.26 1585.50C319.05 1585.50 319.95 1585.50 342.02 1585.50C365.71 1585.50 364.90 1567.67 387.78 1567.67C410.66 1567.67 409.86 1585.50 433.54 1585.50C455.62 1585.50 456.42 1585.50 479.30 1585.50C502.18 1585.50 502.18 1585.50 525.07 1585.50C547.95 1585.50 552.80 1585.50 570.83 1585.50C598.56 1585.50 591.50 1556.45 616.59 1532.01C637.26 1511.88 639.47 1514.19 662.35 1496.36C685.23 1478.53 692.39 1460.70 708.11 1460.70C738.15 1460.70 753.87 1561.73 753.87 1561.73" fill="none" stroke="#1aad19" stroke-width="2" stroke-linejoin="round"/><circle cx="250.50" cy="1579.56" r="2" fill="#fff" stroke="#1aad19" stroke-width="1.600"/><circle cx="296.26" cy="1585.50" r="2" fill="#fff" stroke="#1aad19" stroke-width="1.600"/><circle cx="342.02" cy="1585.50" r="2" fill="#fff" stroke="#1aad19" stroke-width="1.600"/><circle cx="387.78" cy="1567.67" r="2" fill="#fff" stroke="#1aad19" stroke-width="1.600"/><circle cx="433.54" cy="1585.50" r="2" fill="#fff" stroke="#1aad19" stroke-width="1.600"/><circle cx="479.30" cy="1585.50" r="2" fill="#fff" stroke="#1aad19" stroke-width="1.600"/><circle cx="525.07" cy="1585.50" r="2" fill="#fff" stroke="#1aad19" stroke-width="1.600"/><circle cx="570.83" cy="1585.50" r="2" fill="#fff" stroke="#1aad19" stroke-width="1.600"/><circle cx="616.59" cy="1532.01" r="2" fill="#fff" stroke="#1aad19" stroke-width="1.600"/><circle cx="662.35" cy="1496.36" r="2" fill="#fff" stroke="#1aad19" stroke-width="1.600"/><circle cx="708.11" cy="1460.70" r="2" fill="#fff" stroke="#1aad19" stroke-width="1.600"/><circle cx="753.87" cy="1561.73" r="2" fill="#fff" stroke="#1aad19" stroke-width="1.600"/><path d="M250.50 1549.84C250.50 1549.84 270.68 1585.50 296.26 1585.50C316.44 1585.50 319.14 1585.50 342.02 1585.50C364.90 1585.50 364.90 1585.50 387.78 1585.50C410.66 1585.50 410.66 1585.50 433.54 1585.50C456.42 1585.50 456.42 1585.50 479.30 1585.50C502.18 1585.50 503.55 1585.50 525.07 1585.50C549.31 1585.50 560.81 1583.84 570.83 1561.73C606.57 1482.81 582.90 1383.44 616.59 1383.44C628.66 1383.44 643.59 1404.18 662.35 1430.99C689.35 1469.55 677.31 1501.96 708.11 1514.19C723.07 1520.13 730.89 1520.13 753.87 1520.13C776.65 1520.13 780.17 1520.13 799.63 1520.13C825.93 1520.13 820.44 1561.73 845.39 1561.73C866.20 1561.73 866.91 1537.96 891.15 1537.96C912.67 1537.96 914.84 1537.96 936.91 1537.96C960.60 1537.96 963.15 1520.13 982.67 1520.13C1008.91 1520.13 1001.51 1559.17 1028.43 1567.67C1047.27 1573.61 1051.32 1570.64 1074.20 1573.61C1097.08 1576.59 1097.08 1576.59 1119.96 1579.56C1142.84 1582.53 1145.44 1585.50 1165.72 1585.50C1191.20 1585.50 1188.60 1567.67 1211.48 1549.84C1234.36 1532.01 1235.09 1514.19 1257.24 1514.19C1280.85 1514.19 1303.00 1555.79 1303.00 1555.79" fill="none" stroke="#1890ff" stroke-width="2" stroke-linejoin="round"/><circle cx="250.50" cy="1549.84" r="2" fill="#fff" stroke="#1890ff" stroke-width="1.600"/><circle cx="296.26" cy="1585.50" r="2" fill="#fff" stroke="#1890ff" stroke-width="1.600"/><circle cx="342.02" cy="1585.50" r="2" fill="#fff" stroke="#1890ff" stroke-width="1.600"/><circle cx="387.78" cy="1585.50" r="2" fill="#fff" stroke="#1890ff" stroke-width="1.600"/><circle cx="433.54" cy="1585.50" r="2" fill="#fff" stroke="#1890ff" stroke-width="1.600"/><circle cx="479.30" cy="1585.50" r="2" fill="#fff" stroke="#1890ff" stroke-width="1.600"/><circle cx="525.07" cy="1585.50" r="2" fill="#fff" stroke="#1890ff" stroke-width="1.600"/><circle cx="570.83" cy="1561.73" r="2" fill="#fff" stroke="#1890ff" stroke-width="1.600"/><circle cx="616.59" cy="1383.44" r="2" fill="#fff" stroke="#1890ff" stroke-width="1.600"/><circle cx="662.35" cy="1430.99" r="2" fill="#fff" stroke="#1890ff" stroke-width="1.600"/><circle cx="708.11" cy="1514.19" r="2" fill="#fff" stroke="#1890ff" stroke-width="1.600"/><circle cx="753.87" cy="1520.13" r="2" fill="#fff" stroke="#1890ff" stroke-width="1.600"/><circle cx="799.63" cy="1520.13" r="2" fill="#fff" stroke="#1890ff" stroke-width="1.600"/><circle cx="845.39" cy="1561.73" r="2" fill="#fff" stroke="#1890ff" stroke-width="1.600"/><circle cx="891.15" cy="1537.96" r="2" fill="#fff" stroke="#1890ff" stroke-width="1.600"/><circle cx="936.91" cy="1537.96" r="2" fill="#fff" stroke="#1890ff" stroke-width="1.600"/><circle cx="982.67" cy="1520.13" r="2" fill="#fff" stroke="#1890ff" stroke-width="1.600"/><circle cx="1028.43" cy="1567.67" r="2" fill="#fff" stroke="#1890ff" stroke-width="1.600"/><circle cx="1074.20" cy="1573.61" r="2" fill="#fff" stroke="#1890ff" stroke-width="1.600"/><circle cx="1119.96" cy="1579.56" r="2" fill="#fff" stroke="#1890ff" stroke-width="1.600"/><circle cx="1165.72" cy="1585.50" r="2" fill="#fff" stroke="#1890ff" stroke-width="1.600"/><circle cx="1211.48" cy="1549.84" r="2" fill="#fff" stroke="#1890ff" stroke-width="1.600"/><circle cx="1257.24" cy="1514.19" r="2" fill="#fff" stroke="#1890ff" stroke-width="1.600"/><circle cx="1303.00" cy="1555.79" r="2" fill="#fff" stroke="#1890ff" stroke-width="1.600"/><path d="M713.3 1344.500h25.400" stroke="#1aad19" stroke-width="2"/><circle cx="726.0" cy="1344.500" r="5.400" fill="#fff" stroke="#1aad19" stroke-width="2"/><text x="743.8" y="1348.900" font-size="12" fill="#333">今日</text><path d="M778.4 1344.500h25.400" stroke="#1890ff" stroke-width="2"/><circle cx="791.1" cy="1344.500" r="5.400" fill="#fff" stroke="#1890ff" stroke-width="2"/><text x="808.9" y="1348.900" font-size="12" fill="#333">昨日</text></svg>
<div class="card" style="left:212px;top:1629px;width:1121px;height:240px"></div>
<div class="t" style="left:224px;top:1641.0px;height:26px;line-height:26px;font-size:18px;color:#333;font-weight:bold;">近一年员工活跃度</div>
<svg style="left:0;top:0" width="1920" height="1886" viewBox="0 0 1920 1886" font-family="Liberation Sans, sans-serif"><rect x="263.40" y="1788.10" width="19.81" height="21.10" fill="#f9f9f9" stroke="#ececec" stroke-width="0.8"/><rect x="263.40" y="1809.20" width="19.81" height="21.10" fill="#f9f9f9" stroke="#ececec" stroke-width="0.8"/><rect x="263.40" y="1830.30" width="19.81" height="21.10" fill="#f9f9f9" stroke="#ececec" stroke-width="0.8"/><rect x="283.21" y="1703.70" width="19.81" height="21.10" fill="#f9f9f9" stroke="#ececec" stroke-width="0.8"/><rect x="283.21" y="1724.80" width="19.81" height="21.10" fill="#f9f9f9" stroke="#ececec" stroke-width="0.8"/><rect x="283.21" y="1745.90" width="19.81" height="21.10" fill="#f9f9f9" stroke="#ececec" stroke-width="0.8"/><rect x="283.21" y="1767.00" width="19.81" height="21.10" fill="#f9f9f9" stroke="#ececec" stroke-width="0.8"/><rect x="283.21" y="1788.10" width="19.81" height="21.10" fill="#f9f9f9" stroke="#ececec" stroke-width="0.8"/><rect x="283.21" y="1809.20" width="19.81" height="21.10" fill="#f9f9f9" stroke="#ececec" stroke-width="0.8"/><rect x="283.21" y="1830.30" width="19.81" height="21.10" fill="#f9f9f9" stroke="#ececec" stroke-width="0.8"/><rect x="303.03" y="1703.70" width="19.81" height="21.10" fill="#f9f9f9" stroke="#ececec" stroke-width="0.8"/><rect x="303.03" y="1724.80" width="19.81" height="21.10" fill="#f9f9f9" stroke="#ececec" stroke-width="0.8"/><rect x="303.03" y="1745.90" width="19.81" height="21.10" fill="#f9f9f9" stroke="#ececec" stroke-width="0.8"/><rect x="303.03" y="1767.00" width="19.81" height="21.10" fill="#f9f9f9" stroke="#ececec" stroke-width="0.8"/><rect x="303.03" y="1788.10" width="19.81" height="21.10" fill="#f9f9f9" stroke="#ececec" stroke-width="0.8"/><rect x="303.03" y="1809.20" width="19.81" height="21.10" fill="#f9f9f9" stroke="#ececec" stroke-width="0.8"/><rect x="303.03" y="1830.30" width="19.81" height="21.10" fill="#f9f9f9" stroke="#ececec" stroke-width="0.8"/><rect x="322.84" y="1703.70" width="19.81" height="21.10" fill="#f9f9f9" stroke="#ececec" stroke-width="0.8"/><rect x="322.84" y="1724.80" width="19.81" height="21.10" fill="#f9f9f9" stroke="#ececec" stroke-width="0.8"/><rect x="322.84" y="1745.90" width="19.81" height="21.10" fill="#f9f9f9" stroke="#ececec" stroke-width="0.8"/><rect x="322.84" y="1767.00" width="19.81" height="21.10" fill="#f9f9f9" stroke="#ececec" stroke-width="0.8"/><rect x="322.84" y="1788.10" width="19.81" height="21.10" fill="#f9f9f9" stroke="#ececec" stroke-width="0.8"/><rect x="322.84" y="1809.20" width="19.81" height="21.10" fill="#f9f9f9" stroke="#ececec" stroke-width="0.8"/><rect x="322.84" y="1830.30" width="19.81" height="21.10" fill="#f9f9f9" stroke="#ececec" stroke-width="0.8"/><rect x="342.65" y="1703.70" width="19.81" height="21.10" fill="#f9f9f9" stroke="#ececec" stroke-width="0.8"/><rect x="342.65" y="1724.80" width="19.81" height="21.10" fill="#f9f9f9" stroke="#ececec" stroke-width="0.8"/><rect x="342.65" y="1745.90" width="19.81" height="21.10" fill="#f9f9f9" stroke="#ececec" stroke-width="0.8"/><rect x="342.65" y="1767.00" width="19.81" height="21.10" fill="#f9f9f9" stroke="#ececec" stroke-width="0.8"/><rect x="342.65" y="1788.10" width="19.81" height="21.10" fill="#f9f9f9" stroke="#ececec" stroke-width="0.8"/><rect x="342.65" y="1809.20" width="19.81" height="21.10" fill="#f9f9f9" stroke="#ececec" stroke-width="0.8"/><rect x="342.65" y="1830.30" width="19.81" height="21.10" fill="#f9f9f9" stroke="#ececec" stroke-width="0.8"/><rect x="362.47" y="1703.70" width="19.81" height="21.10" fill="#f9f9f9" stroke="#ececec" stroke-width="0.8"/><rect x="362.47" y="1724.80" width="19.81" height="21.10" fill="#f9f9f9" stroke="#ececec" stroke-width="0.8"/><rect x="362.47" y="1745.90" width="19.81" height="21.10" fill="#f9f9f9" stroke="#ececec" stroke-width="0.8"/><rect x="362.47" y="1767.00" width="19.81" height="21.10" fill="#f9f9f9" stroke="#ececec" stroke-width="0.8"/><rect x="362.47" y="1788.10" width="19.81" height="21.10" fill="#f9f9f9" stroke="#ececec" stroke-width="0.8"/><rect x="362.47" y="1809.20" width="19.81" height="21.10" fill="#f9f9f9" stroke="#ececec" stroke-width="0.8"/><rect x="362.47" y="1830.30" width="19.81" height="21.10" fill="#f9f9f9" stroke="#ececec" stroke-width="0.8"/><rect x="382.28" y="1703.70" width="19.81" height="21.10" fill="#f9f9f9" stroke="#ececec" stroke-width="0.8"/><rect x="382.28" y="1724.80" width="19.81" height="21.10" fill="#f9f9f9" stroke="#ececec" stroke-width="0.8"/><rect x="382.28" y="1745.90" width="19.81" height="21.10" fill="#f9f9f9" stroke="#ececec" stroke-width="0.8"/><rect x="382.28" y="1767.00" width="19.81" height="21.10" fill="#f9f9f9" stroke="#ececec" stroke-width="0.8"/><rect x="382.28" y="1788.10" width="19.81" height="21.10" fill="#f9f9f9" stroke="#ececec" stroke-width="0.8"/><rect x="382.28" y="1809.20" width="19.81" height="21.10" fill="#f9f9f9" stroke="#ececec" stroke-width="0.8"/><rect x="382.28" y="1830.30" width="19.81" height="21.10" fill="#f9f9f9" stroke="#ececec" stroke-width="0.8"/><rect x="402.09" y="1703.70" width="19.81" height="21.10" fill="#f9f9f9" stroke="#ececec" stroke-width="0.8"/><rect x="402.09" y="1724.80" width="19.81" height="21.10" fill="#f9f9f9" stroke="#ececec" stroke-width="0.8"/><rect x="402.09" y="1745.90" width="19.81" height="21.10" fill="#f9f9f9" stroke="#ececec" stroke-width="0.8"/><rect x="402.09" y="1767.00" width="19.81" height="21.10" fill="#f9f9f9" stroke="#ececec" stroke-width="0.8"/><rect x="402.09" y="1788.10" width="19.81" height="21.10" fill="#f9f9f9" stroke="#ececec" stroke-width="0.8"/><rect x="402.09" y="1809.20" width="19.81" height="21.10" fill="#f9f9f9" stroke="#ececec" stroke-width="0.8"/><rect x="402.09" y="1830.30" width="19.81" height="21.10" fill="#f9f9f9" stroke="#ececec" stroke-width="0.8"/><rect x="421.91" y="1703.70" width="19.81" height="21.10" fill="#f9f9f9" stroke="#ececec" stroke-width="0.8"/><rect x="421.91" y="1724.80" width="19.81" height="21.10" fill="#f9f9f9" stroke="#ececec" stroke-width="0.8"/><rect x="421.91" y="1745.90" width="19.81" height="21.10" fill="#f9f9f9" stroke="#ececec" stroke-width="0.8"/><rect x="421.91" y="1767.00" width="19.81" height="21.10" fill="#f9f9f9" stroke="#ececec" stroke-width="0.8"/><rect x="421.91" y="1788.10" width="19.81" height="21.10" fill="#f9f9f9" stroke="#ececec" stroke-width="0.8"/><rect x="421.91" y="1809.20" width="19.81" height="21.10" fill="#f9f9f9" stroke="#ececec" stroke-width="0.8"/><rect x="421.91" y="1830.30" width="19.81" height="21.10" fill="#f9f9f9" stroke="#ececec" stroke-width="0.8"/><rect x="441.72" y="1703.70" width="19.81" height="21.10" fill="#f9f9f9" stroke="#ececec" stroke-width="0.8"/><rect x="441.72" y="1724.80" width="19.81" height="21.10" fill="#f9f9f9" stroke="#ececec" stroke-width="0.8"/><rect x="441.72" y="1745.90" width="19.81" height="21.10" fill="#f9f9f9" stroke="#ececec" stroke-width="0.8"/><rect x="441.72" y="1767.00" width="19.81" height="21.10" fill="#f9f9f9" stroke="#ececec" stroke-width="0.8"/><rect x="441.72" y="1788.10" width="19.81" height="21.10" fill="#f9f9f9" stroke="#ececec" stroke-width="0.8"/><rect x="441.72" y="1809.20" width="19.81" height="21.10" fill="#f9f9f9" stroke="#ececec" stroke-width="0.8"/><rect x="441.72" y="1830.30" width="19.81" height="21.10" fill="#f9f9f9" stroke="#ececec" stroke-width="0.8"/><rect x="461.53" y="1703.70" width="19.81" height="21.10" fill="#f9f9f9" stroke="#ececec" stroke-width="0.8"/><rect x="461.53" y="1724.80" width="19.81" height="21.10" fill="#f9f9f9" stroke="#ececec" stroke-width="0.8"/><rect x="461.53" y="1745.90" width="19.81" height="21.10" fill="#f9f9f9" stroke="#ececec" stroke-width="0.8"/><rect x="461.53" y="1767.00" width="19.81" height="21.10" fill="#f9f9f9" stroke="#ececec" stroke-width="0.8"/><rect x="461.53" y="1788.10" width="19.81" height="21.10" fill="#f9f9f9" stroke="#ececec" stroke-width="0.8"/><rect x="461.53" y="1809.20" width="19.81" height="21.10" fill="#f9f9f9" stroke="#ececec" stroke-width="0.8"/><rect x="461.53" y="1830.30" width="19.81" height="21.10" fill="#f9f9f9" stroke="#ececec" stroke-width="0.8"/><rect x="481.35" y="1703.70" width="19.81" height="21.10" fill="#f9f9f9" stroke="#ececec" stroke-width="0.8"/><rect x="481.35" y="1724.80" width="19.81" height="21.10" fill="#f9f9f9" stroke="#ececec" stroke-width="0.8"/><rect x="481.35" y="1745.90" width="19.81" height="21.10" fill="#f9f9f9" stroke="#ececec" stroke-width="0.8"/><rect x="481.35" y="1767.00" width="19.81" height="21.10" fill="#f9f9f9" stroke="#ececec" stroke-width="0.8"/><rect x="481.35" y="1788.10" width="19.81" height="21.10" fill="#f9f9f9" stroke="#ececec" stroke-width="0.8"/><rect x="481.35" y="1809.20" width="19.81" height="21.10" fill="#f9f9f9" stroke="#ececec" stroke-width="0.8"/><rect x="481.35" y="1830.30" width="19.81" height="21.10" fill="#f9f9f9" stroke="#ececec" stroke-width="0.8"/><rect x="501.16" y="1703.70" width="19.81" height="21.10" fill="#f9f9f9" stroke="#ececec" stroke-width="0.8"/><rect x="501.16" y="1724.80" width="19.81" height="21.10" fill="#f9f9f9" stroke="#ececec" stroke-width="0.8"/><rect x="501.16" y="1745.90" width="19.81" height="21.10" fill="#f9f9f9" stroke="#ececec" stroke-width="0.8"/><rect x="501.16" y="1767.00" width="19.81" height="21.10" fill="#f9f9f9" stroke="#ececec" stroke-width="0.8"/><rect x="501.16" y="1788.10" width="19.81" height="21.10" fill="#f9f9f9" stroke="#ececec" stroke-width="0.8"/><rect x="501.16" y="1809.20" width="19.81" height="21.10" fill="#f9f9f9" stroke="#ececec" stroke-width="0.8"/><rect x="501.16" y="1830.30" width="19.81" height="21.10" fill="#f9f9f9" stroke="#ececec" stroke-width="0.8"/><rect x="520.97" y="1703.70" width="19.81" height="21.10" fill="#f9f9f9" stroke="#ececec" stroke-width="0.8"/><rect x="520.97" y="1724.80" width="19.81" height="21.10" fill="#f9f9f9" stroke="#ececec" stroke-width="0.8"/><rect x="520.97" y="1745.90" width="19.81" height="21.10" fill="#f9f9f9" stroke="#ececec" stroke-width="0.8"/><rect x="520.97" y="1767.00" width="19.81" height="21.10" fill="#f9f9f9" stroke="#ececec" stroke-width="0.8"/><rect x="520.97" y="1788.10" width="19.81" height="21.10" fill="#f9f9f9" stroke="#ececec" stroke-width="0.8"/><rect x="520.97" y="1809.20" width="19.81" height="21.10" fill="#f9f9f9" stroke="#ececec" stroke-width="0.8"/><rect x="520.97" y="1830.30" width="19.81" height="21.10" fill="#f9f9f9" stroke="#ececec" stroke-width="0.8"/><rect x="540.78" y="1703.70" width="19.81" height="21.10" fill="#f9f9f9" stroke="#ececec" stroke-width="0.8"/><rect x="540.78" y="1724.80" width="19.81" height="21.10" fill="#f9f9f9" stroke="#ececec" stroke-width="0.8"/><rect x="540.78" y="1745.90" width="19.81" height="21.10" fill="#f9f9f9" stroke="#ececec" stroke-width="0.8"/><rect x="540.78" y="1767.00" width="19.81" height="21.10" fill="#f9f9f9" stroke="#ececec" stroke-width="0.8"/><rect x="540.78" y="1788.10" width="19.81" height="21.10" fill="#f9f9f9" stroke="#ececec" stroke-width="0.8"/><rect x="540.78" y="1809.20" width="19.81" height="21.10" fill="#f9f9f9" stroke="#ececec" stroke-width="0.8"/><rect x="540.78" y="1830.30" width="19.81" height="21.10" fill="#f9f9f9" stroke="#ececec" stroke-width="0.8"/><rect x="560.60" y="1703.70" width="19.81" height="21.10" fill="#f9f9f9" stroke="#ececec" stroke-width="0.8"/><rect x="560.60" y="1724.80" width="19.81" height="21.10" fill="#f9f9f9" stroke="#ececec" stroke-width="0.8"/><rect x="560.60" y="1745.90" width="19.81" height="21.10" fill="#f9f9f9" stroke="#ececec" stroke-width="0.8"/><rect x="560.60" y="1767.00" width="19.81" height="21.10" fill="#f9f9f9" stroke="#ececec" stroke-width="0.8"/><rect x="560.60" y="1788.10" width="19.81" height="21.10" fill="#f9f9f9" stroke="#ececec" stroke-width="0.8"/><rect x="560.60" y="1809.20" width="19.81" height="21.10" fill="#f9f9f9" stroke="#ececec" stroke-width="0.8"/><rect x="560.60" y="1830.30" width="19.81" height="21.10" fill="#f9f9f9" stroke="#ececec" stroke-width="0.8"/><rect x="580.41" y="1703.70" width="19.81" height="21.10" fill="#f9f9f9" stroke="#ececec" stroke-width="0.8"/><rect x="580.41" y="1724.80" width="19.81" height="21.10" fill="#f9f9f9" stroke="#ececec" stroke-width="0.8"/><rect x="580.41" y="1745.90" width="19.81" height="21.10" fill="#f9f9f9" stroke="#ececec" stroke-width="0.8"/><rect x="580.41" y="1767.00" width="19.81" height="21.10" fill="#f9f9f9" stroke="#ececec" stroke-width="0.8"/><rect x="580.41" y="1788.10" width="19.81" height="21.10" fill="#f9f9f9" stroke="#ececec" stroke-width="0.8"/><rect x="580.41" y="1809.20" width="19.81" height="21.10" fill="#f9f9f9" stroke="#ececec" stroke-width="0.8"/><rect x="580.41" y="1830.30" width="19.81" height="21.10" fill="#f9f9f9" stroke="#ececec" stroke-width="0.8"/><rect x="600.22" y="1703.70" width="19.81" height="21.10" fill="#68c867" stroke="#ececec" stroke-width="0.8"/><rect x="600.22" y="1724.80" width="19.81" height="21.10" fill="#c1e6c1" stroke="#ececec" stroke-width="0.8"/><rect x="600.22" y="1745.90" width="19.81" height="21.10" fill="#d8eed7" stroke="#ececec" stroke-width="0.8"/><rect x="600.22" y="1767.00" width="19.81" height="21.10" fill="#f2f7f2" stroke="#ececec" stroke-width="0.8"/><rect x="600.22" y="1788.10" width="19.81" height="21.10" fill="#f5f7f5" stroke="#ececec" stroke-width="0.8"/><rect x="600.22" y="1809.20" width="19.81" height="21.10" fill="#ecf4ec" stroke="#ececec" stroke-width="0.8"/><rect x="600.22" y="1830.30" width="19.81" height="21.10" fill="#c1e6c1" stroke="#ececec" stroke-width="0.8"/><rect x="620.04" y="1703.70" width="19.81" height="21.10" fill="#f7f8f7" stroke="#ececec" stroke-width="0.8"/><rect x="620.04" y="1724.80" width="19.81" height="21.10" fill="#e3f1e3" stroke="#ececec" stroke-width="0.8"/><rect x="620.04" y="1745.90" width="19.81" height="21.10" fill="#f9f9f9" stroke="#ececec" stroke-width="0.8"/><rect x="620.04" y="1767.00" width="19.81" height="21.10" fill="#f9f9f9" stroke="#ececec" stroke-width="0.8"/><rect x="620.04" y="1788.10" width="19.81" height="21.10" fill="#f7f8f7" stroke="#ececec" stroke-width="0.8"/><rect x="620.04" y="1809.20" width="19.81" height="21.10" fill="#f2f7f2" stroke="#ececec" stroke-width="0.8"/><rect x="620.04" y="1830.30" width="19.81" height="21.10" fill="#ecf4ec" stroke="#ececec" stroke-width="0.8"/><rect x="639.85" y="1703.70" width="19.81" height="21.10" fill="#f9f9f9" stroke="#ececec" stroke-width="0.8"/><rect x="639.85" y="1724.80" width="19.81" height="21.10" fill="#f9f9f9" stroke="#ececec" stroke-width="0.8"/><rect x="639.85" y="1745.90" width="19.81" height="21.10" fill="#f2f7f2" stroke="#ececec" stroke-width="0.8"/><rect x="639.85" y="1767.00" width="19.81" height="21.10" fill="#f2f7f2" stroke="#ececec" stroke-width="0.8"/><rect x="639.85" y="1788.10" width="19.81" height="21.10" fill="#e9f4e9" stroke="#ececec" stroke-width="0.8"/><rect x="639.85" y="1809.20" width="19.81" height="21.10" fill="#f9f9f9" stroke="#ececec" stroke-width="0.8"/><rect x="639.85" y="1830.30" width="19.81" height="21.10" fill="#f9f9f9" stroke="#ececec" stroke-width="0.8"/><rect x="659.66" y="1703.70" width="19.81" height="21.10" fill="#f9f9f9" stroke="#ececec" stroke-width="0.8"/><rect x="659.66" y="1724.80" width="19.81" height="21.10" fill="#f9f9f9" stroke="#ececec" stroke-width="0.8"/><rect x="659.66" y="1745.90" width="19.81" height="21.10" fill="#f5f7f5" stroke="#ececec" stroke-width="0.8"/><rect x="659.66" y="1767.00" width="19.81" height="21.10" fill="#f5f7f5" stroke="#ececec" stroke-width="0.8"/><rect x="659.66" y="1788.10" width="19.81" height="21.10" fill="#f5f7f5" stroke="#ececec" stroke-width="0.8"/><rect x="659.66" y="1809.20" width="19.81" height="21.10" fill="#f9f9f9" stroke="#ececec" stroke-width="0.8"/><rect x="659.66" y="1830.30" width="19.81" height="21.10" fill="#f7f8f7" stroke="#ececec" stroke-width="0.8"/><rect x="679.48" y="1703.70" width="19.81" height="21.10" fill="#f9f9f9" stroke="#ececec" stroke-width="0.8"/><rect x="679.48" y="1724.80" width="19.81" height="21.10" fill="#f5f7f5" stroke="#ececec" stroke-width="0.8"/><rect x="679.48" y="1745.90" width="19.81" height="21.10" fill="#f5f7f5" stroke="#ececec" stroke-width="0.8"/><rect x="679.48" y="1767.00" width="19.81" height="21.10" fill="#f9f9f9" stroke="#ececec" stroke-width="0.8"/><rect x="679.48" y="1788.10" width="19.81" height="21.10" fill="#f7f8f7" stroke="#ececec" stroke-width="0.8"/><rect x="679.48" y="1809.20" width="19.81" height="21.10" fill="#f9f9f9" stroke="#ececec" stroke-width="0.8"/><rect x="679.48" y="1830.30" width="19.81" height="21.10" fill="#f5f7f5" stroke="#ececec" stroke-width="0.8"/><rect x="699.29" y="1703.70" width="19.81" height="21.10" fill="#f9f9f9" stroke="#ececec" stroke-width="0.8"/><rect x="699.29" y="1724.80" width="19.81" height="21.10" fill="#f5f7f5" stroke="#ececec" stroke-width="0.8"/><rect x="699.29" y="1745.90" width="19.81" height="21.10" fill="#f9f9f9" stroke="#ececec" stroke-width="0.8"/><rect x="699.29" y="1767.00" width="19.81" height="21.10" fill="#f5f7f5" stroke="#ececec" stroke-width="0.8"/><rect x="699.29" y="1788.10" width="19.81" height="21.10" fill="#f5f7f5" stroke="#ececec" stroke-width="0.8"/><rect x="699.29" y="1809.20" width="19.81" height="21.10" fill="#f2f7f2" stroke="#ececec" stroke-width="0.8"/><rect x="699.29" y="1830.30" width="19.81" height="21.10" fill="#c8e8c8" stroke="#ececec" stroke-width="0.8"/><rect x="719.10" y="1703.70" width="19.81" height="21.10" fill="#f9f9f9" stroke="#ececec" stroke-width="0.8"/><rect x="719.10" y="1724.80" width="19.81" height="21.10" fill="#f2f7f2" stroke="#ececec" stroke-width="0.8"/><rect x="719.10" y="1745.90" width="19.81" height="21.10" fill="#e9f4e9" stroke="#ececec" stroke-width="0.8"/><rect x="719.10" y="1767.00" width="19.81" height="21.10" fill="#f2f7f2" stroke="#ececec" stroke-width="0.8"/><rect x="719.10" y="1788.10" width="19.81" height="21.10" fill="#f5f7f5" stroke="#ececec" stroke-width="0.8"/><rect x="719.10" y="1809.20" width="19.81" height="21.10" fill="#f7f8f7" stroke="#ececec" stroke-width="0.8"/><rect x="719.10" y="1830.30" width="19.81" height="21.10" fill="#f9f9f9" stroke="#ececec" stroke-width="0.8"/><rect x="738.92" y="1703.70" width="19.81" height="21.10" fill="#f5f7f5" stroke="#ececec" stroke-width="0.8"/><rect x="738.92" y="1724.80" width="19.81" height="21.10" fill="#f9f9f9" stroke="#ececec" stroke-width="0.8"/><rect x="738.92" y="1745.90" width="19.81" height="21.10" fill="#f2f7f2" stroke="#ececec" stroke-width="0.8"/><rect x="738.92" y="1767.00" width="19.81" height="21.10" fill="#f5f7f5" stroke="#ececec" stroke-width="0.8"/><rect x="738.92" y="1788.10" width="19.81" height="21.10" fill="#f5f7f5" stroke="#ececec" stroke-width="0.8"/><rect x="738.92" y="1809.20" width="19.81" height="21.10" fill="#f9f9f9" stroke="#ececec" stroke-width="0.8"/><rect x="738.92" y="1830.30" width="19.81" height="21.10" fill="#f9f9f9" stroke="#ececec" stroke-width="0.8"/><rect x="758.73" y="1703.70" width="19.81" height="21.10" fill="#f9f9f9" stroke="#ececec" stroke-width="0.8"/><rect x="758.73" y="1724.80" width="19.81" height="21.10" fill="#f9f9f9" stroke="#ececec" stroke-width="0.8"/><rect x="758.73" y="1745.90" width="19.81" height="21.10" fill="#f9f9f9" stroke="#ececec" stroke-width="0.8"/><rect x="758.73" y="1767.00" width="19.81" height="21.10" fill="#f9f9f9" stroke="#ececec" stroke-width="0.8"/><rect x="758.73" y="1788.10" width="19.81" height="21.10" fill="#f9f9f9" stroke="#ececec" stroke-width="0.8"/><rect x="758.73" y="1809.20" width="19.81" height="21.10" fill="#f9f9f9" stroke="#ececec" stroke-width="0.8"/><rect x="758.73" y="1830.30" width="19.81" height="21.10" fill="#f9f9f9" stroke="#ececec" stroke-width="0.8"/><rect x="778.54" y="1703.70" width="19.81" height="21.10" fill="#f9f9f9" stroke="#ececec" stroke-width="0.8"/><rect x="778.54" y="1724.80" width="19.81" height="21.10" fill="#f9f9f9" stroke="#ececec" stroke-width="0.8"/><rect x="778.54" y="1745.90" width="19.81" height="21.10" fill="#f9f9f9" stroke="#ececec" stroke-width="0.8"/><rect x="778.54" y="1767.00" width="19.81" height="21.10" fill="#f9f9f9" stroke="#ececec" stroke-width="0.8"/><rect x="778.54" y="1788.10" width="19.81" height="21.10" fill="#f9f9f9" stroke="#ececec" stroke-width="0.8"/><rect x="778.54" y="1809.20" width="19.81" height="21.10" fill="#f9f9f9" stroke="#ececec" stroke-width="0.8"/><rect x="778.54" y="1830.30" width="19.81" height="21.10" fill="#f9f9f9" stroke="#ececec" stroke-width="0.8"/><rect x="798.36" y="1703.70" width="19.81" height="21.10" fill="#f9f9f9" stroke="#ececec" stroke-width="0.8"/><rect x="798.36" y="1724.80" width="19.81" height="21.10" fill="#f9f9f9" stroke="#ececec" stroke-width="0.8"/><rect x="798.36" y="1745.90" width="19.81" height="21.10" fill="#f9f9f9" stroke="#ececec" stroke-width="0.8"/><rect x="798.36" y="1767.00" width="19.81" height="21.10" fill="#f9f9f9" stroke="#ececec" stroke-width="0.8"/><rect x="798.36" y="1788.10" width="19.81" height="21.10" fill="#f9f9f9" stroke="#ececec" stroke-width="0.8"/><rect x="798.36" y="1809.20" width="19.81" height="21.10" fill="#f9f9f9" stroke="#ececec" stroke-width="0.8"/><rect x="798.36" y="1830.30" width="19.81" height="21.10" fill="#f9f9f9" stroke="#ececec" stroke-width="0.8"/><rect x="818.17" y="1703.70" width="19.81" height="21.10" fill="#f9f9f9" stroke="#ececec" stroke-width="0.8"/><rect x="818.17" y="1724.80" width="19.81" height="21.10" fill="#f9f9f9" stroke="#ececec" stroke-width="0.8"/><rect x="818.17" y="1745.90" width="19.81" height="21.10" fill="#f9f9f9" stroke="#ececec" stroke-width="0.8"/><rect x="818.17" y="1767.00" width="19.81" height="21.10" fill="#f9f9f9" stroke="#ececec" stroke-width="0.8"/><rect x="818.17" y="1788.10" width="19.81" height="21.10" fill="#f9f9f9" stroke="#ececec" stroke-width="0.8"/><rect x="818.17" y="1809.20" width="19.81" height="21.10" fill="#f9f9f9" stroke="#ececec" stroke-width="0.8"/><rect x="818.17" y="1830.30" width="19.81" height="21.10" fill="#f9f9f9" stroke="#ececec" stroke-width="0.8"/><rect x="837.98" y="1703.70" width="19.81" height="21.10" fill="#f9f9f9" stroke="#ececec" stroke-width="0.8"/><rect x="837.98" y="1724.80" width="19.81" height="21.10" fill="#f9f9f9" stroke="#ececec" stroke-width="0.8"/><rect x="837.98" y="1745.90" width="19.81" height="21.10" fill="#f9f9f9" stroke="#ececec" stroke-width="0.8"/><rect x="837.98" y="1767.00" width="19.81" height="21.10" fill="#f9f9f9" stroke="#ececec" stroke-width="0.8"/><rect x="837.98" y="1788.10" width="19.81" height="21.10" fill="#f9f9f9" stroke="#ececec" stroke-width="0.8"/><rect x="837.98" y="1809.20" width="19.81" height="21.10" fill="#f9f9f9" stroke="#ececec" stroke-width="0.8"/><rect x="837.98" y="1830.30" width="19.81" height="21.10" fill="#f9f9f9" stroke="#ececec" stroke-width="0.8"/><rect x="857.80" y="1703.70" width="19.81" height="21.10" fill="#f9f9f9" stroke="#ececec" stroke-width="0.8"/><rect x="857.80" y="1724.80" width="19.81" height="21.10" fill="#f9f9f9" stroke="#ececec" stroke-width="0.8"/><rect x="857.80" y="1745.90" width="19.81" height="21.10" fill="#f9f9f9" stroke="#ececec" stroke-width="0.8"/><rect x="857.80" y="1767.00" width="19.81" height="21.10" fill="#f9f9f9" stroke="#ececec" stroke-width="0.8"/><rect x="857.80" y="1788.10" width="19.81" height="21.10" fill="#f9f9f9" stroke="#ececec" stroke-width="0.8"/><rect x="857.80" y="1809.20" width="19.81" height="21.10" fill="#f9f9f9" stroke="#ececec" stroke-width="0.8"/><rect x="857.80" y="1830.30" width="19.81" height="21.10" fill="#f9f9f9" stroke="#ececec" stroke-width="0.8"/><rect x="877.61" y="1703.70" width="19.81" height="21.10" fill="#f9f9f9" stroke="#ececec" stroke-width="0.8"/><rect x="877.61" y="1724.80" width="19.81" height="21.10" fill="#f9f9f9" stroke="#ececec" stroke-width="0.8"/><rect x="877.61" y="1745.90" width="19.81" height="21.10" fill="#f9f9f9" stroke="#ececec" stroke-width="0.8"/><rect x="877.61" y="1767.00" width="19.81" height="21.10" fill="#f9f9f9" stroke="#ececec" stroke-width="0.8"/><rect x="877.61" y="1788.10" width="19.81" height="21.10" fill="#f9f9f9" stroke="#ececec" stroke-width="0.8"/><rect x="877.61" y="1809.20" width="19.81" height="21.10" fill="#f9f9f9" stroke="#ececec" stroke-width="0.8"/><rect x="877.61" y="1830.30" width="19.81" height="21.10" fill="#f9f9f9" stroke="#ececec" stroke-width="0.8"/><rect x="897.42" y="1703.70" width="19.81" height="21.10" fill="#f9f9f9" stroke="#ececec" stroke-width="0.8"/><rect x="897.42" y="1724.80" width="19.81" height="21.10" fill="#f9f9f9" stroke="#ececec" stroke-width="0.8"/><rect x="897.42" y="1745.90" width="19.81" height="21.10" fill="#f9f9f9" stroke="#ececec" stroke-width="0.8"/><rect x="897.42" y="1767.00" width="19.81" height="21.10" fill="#f9f9f9" stroke="#ececec" stroke-width="0.8"/><rect x="897.42" y="1788.10" width="19.81" height="21.10" fill="#f9f9f9" stroke="#ececec" stroke-width="0.8"/><rect x="897.42" y="1809.20" width="19.81" height="21.10" fill="#f9f9f9" stroke="#ececec" stroke-width="0.8"/><rect x="897.42" y="1830.30" width="19.81" height="21.10" fill="#f9f9f9" stroke="#ececec" stroke-width="0.8"/><rect x="917.24" y="1703.70" width="19.81" height="21.10" fill="#f9f9f9" stroke="#ececec" stroke-width="0.8"/><rect x="917.24" y="1724.80" width="19.81" height="21.10" fill="#f9f9f9" stroke="#ececec" stroke-width="0.8"/><rect x="917.24" y="1745.90" width="19.81" height="21.10" fill="#f9f9f9" stroke="#ececec" stroke-width="0.8"/><rect x="917.24" y="1767.00" width="19.81" height="21.10" fill="#f9f9f9" stroke="#ececec" stroke-width="0.8"/><rect x="917.24" y="1788.10" width="19.81" height="21.10" fill="#f9f9f9" stroke="#ececec" stroke-width="0.8"/><rect x="917.24" y="1809.20" width="19.81" height="21.10" fill="#f9f9f9" stroke="#ececec" stroke-width="0.8"/><rect x="917.24" y="1830.30" width="19.81" height="21.10" fill="#f9f9f9" stroke="#ececec" stroke-width="0.8"/><rect x="937.05" y="1703.70" width="19.81" height="21.10" fill="#f9f9f9" stroke="#ececec" stroke-width="0.8"/><rect x="937.05" y="1724.80" width="19.81" height="21.10" fill="#f9f9f9" stroke="#ececec" stroke-width="0.8"/><rect x="937.05" y="1745.90" width="19.81" height="21.10" fill="#f9f9f9" stroke="#ececec" stroke-width="0.8"/><rect x="937.05" y="1767.00" width="19.81" height="21.10" fill="#f9f9f9" stroke="#ececec" stroke-width="0.8"/><rect x="937.05" y="1788.10" width="19.81" height="21.10" fill="#f9f9f9" stroke="#ececec" stroke-width="0.8"/><rect x="937.05" y="1809.20" width="19.81" height="21.10" fill="#f9f9f9" stroke="#ececec" stroke-width="0.8"/><rect x="937.05" y="1830.30" width="19.81" height="21.10" fill="#f9f9f9" stroke="#ececec" stroke-width="0.8"/><rect x="956.86" y="1703.70" width="19.81" height="21.10" fill="#f9f9f9" stroke="#ececec" stroke-width="0.8"/><rect x="956.86" y="1724.80" width="19.81" height="21.10" fill="#f9f9f9" stroke="#ececec" stroke-width="0.8"/><rect x="956.86" y="1745.90" width="19.81" height="21.10" fill="#f9f9f9" stroke="#ececec" stroke-width="0.8"/><rect x="956.86" y="1767.00" width="19.81" height="21.10" fill="#f9f9f9" stroke="#ececec" stroke-width="0.8"/><rect x="956.86" y="1788.10" width="19.81" height="21.10" fill="#f9f9f9" stroke="#ececec" stroke-width="0.8"/><rect x="956.86" y="1809.20" width="19.81" height="21.10" fill="#f9f9f9" stroke="#ececec" stroke-width="0.8"/><rect x="956.86" y="1830.30" width="19.81" height="21.10" fill="#f9f9f9" stroke="#ececec" stroke-width="0.8"/><rect x="976.68" y="1703.70" width="19.81" height="21.10" fill="#f9f9f9" stroke="#ececec" stroke-width="0.8"/><rect x="976.68" y="1724.80" width="19.81" height="21.10" fill="#f9f9f9" stroke="#ececec" stroke-width="0.8"/><rect x="976.68" y="1745.90" width="19.81" height="21.10" fill="#f9f9f9" stroke="#ececec" stroke-width="0.8"/><rect x="976.68" y="1767.00" width="19.81" height="21.10" fill="#f9f9f9" stroke="#ececec" stroke-width="0.8"/><rect x="976.68" y="1788.10" width="19.81" height="21.10" fill="#f9f9f9" stroke="#ececec" stroke-width="0.8"/><rect x="976.68" y="1809.20" width="19.81" height="21.10" fill="#f9f9f9" stroke="#ececec" stroke-width="0.8"/><rect x="976.68" y="1830.30" width="19.81" height="21.10" fill="#f9f9f9" stroke="#ececec" stroke-width="0.8"/><rect x="996.49" y="1703.70" width="19.81" height="21.10" fill="#f9f9f9" stroke="#ececec" stroke-width="0.8"/><rect x="996.49" y="1724.80" width="19.81" height="21.10" fill="#f9f9f9" stroke="#ececec" stroke-width="0.8"/><rect x="996.49" y="1745.90" width="19.81" height="21.10" fill="#f9f9f9" stroke="#ececec" stroke-width="0.8"/><rect x="996.49" y="1767.00" width="19.81" height="21.10" fill="#f9f9f9" stroke="#ececec" stroke-width="0.8"/><rect x="996.49" y="1788.10" width="19.81" height="21.10" fill="#f9f9f9" stroke="#ececec" stroke-width="0.8"/><rect x="996.49" y="1809.20" width="19.81" height="21.10" fill="#f9f9f9" stroke="#ececec" stroke-width="0.8"/><rect x="996.49" y="1830.30" width="19.81" height="21.10" fill="#f9f9f9" stroke="#ececec" stroke-width="0.8"/><rect x="1016.30" y="1703.70" width="19.81" height="21.10" fill="#def0de" stroke="#ececec" stroke-width="0.8"/><rect x="1016.30" y="1724.80" width="19.81" height="21.10" fill="#def0de" stroke="#ececec" stroke-width="0.8"/><rect x="1016.30" y="1745.90" width="19.81" height="21.10" fill="#def0de" stroke="#ececec" stroke-width="0.8"/><rect x="1016.30" y="1767.00" width="19.81" height="21.10" fill="#e9f4e9" stroke="#ececec" stroke-width="0.8"/><rect x="1016.30" y="1788.10" width="19.81" height="21.10" fill="#eef5ee" stroke="#ececec" stroke-width="0.8"/><rect x="1016.30" y="1809.20" width="19.81" height="21.10" fill="#e5f2e5" stroke="#ececec" stroke-width="0.8"/><rect x="1016.30" y="1830.30" width="19.81" height="21.10" fill="#eef5ee" stroke="#ececec" stroke-width="0.8"/><rect x="1036.12" y="1703.70" width="19.81" height="21.10" fill="#f2f7f2" stroke="#ececec" stroke-width="0.8"/><rect x="1036.12" y="1724.80" width="19.81" height="21.10" fill="#ecf4ec" stroke="#ececec" stroke-width="0.8"/><rect x="1036.12" y="1745.90" width="19.81" height="21.10" fill="#f0f6f0" stroke="#ececec" stroke-width="0.8"/><rect x="1036.12" y="1767.00" width="19.81" height="21.10" fill="#def0de" stroke="#ececec" stroke-width="0.8"/><rect x="1036.12" y="1788.10" width="19.81" height="21.10" fill="#dcefdc" stroke="#ececec" stroke-width="0.8"/><rect x="1036.12" y="1809.20" width="19.81" height="21.10" fill="#f9f9f9" stroke="#ececec" stroke-width="0.8"/><rect x="1036.12" y="1830.30" width="19.81" height="21.10" fill="#f9f9f9" stroke="#ececec" stroke-width="0.8"/><rect x="1055.93" y="1703.70" width="19.81" height="21.10" fill="#f9f9f9" stroke="#ececec" stroke-width="0.8"/><rect x="1055.93" y="1724.80" width="19.81" height="21.10" fill="#f9f9f9" stroke="#ececec" stroke-width="0.8"/><rect x="1055.93" y="1745.90" width="19.81" height="21.10" fill="#f9f9f9" stroke="#ececec" stroke-width="0.8"/><rect x="1055.93" y="1767.00" width="19.81" height="21.10" fill="#f9f9f9" stroke="#ececec" stroke-width="0.8"/><rect x="1055.93" y="1788.10" width="19.81" height="21.10" fill="#f9f9f9" stroke="#ececec" stroke-width="0.8"/><rect x="1055.93" y="1809.20" width="19.81" height="21.10" fill="#a4dca4" stroke="#ececec" stroke-width="0.8"/><rect x="1055.93" y="1830.30" width="19.81" height="21.10" fill="#eef5ee" stroke="#ececec" stroke-width="0.8"/><rect x="1075.74" y="1703.70" width="19.81" height="21.10" fill="#f0f6f0" stroke="#ececec" stroke-width="0.8"/><rect x="1075.74" y="1724.80" width="19.81" height="21.10" fill="#dcefdc" stroke="#ececec" stroke-width="0.8"/><rect x="1075.74" y="1745.90" width="19.81" height="21.10" fill="#d1ebd1" stroke="#ececec" stroke-width="0.8"/><rect x="1075.74" y="1767.00" width="19.81" height="21.10" fill="#d8eed7" stroke="#ececec" stroke-width="0.8"/><rect x="1075.74" y="1788.10" width="19.81" height="21.10" fill="#d3ecd3" stroke="#ececec" stroke-width="0.8"/><rect x="1075.74" y="1809.20" width="19.81" height="21.10" fill="#eef5ee" stroke="#ececec" stroke-width="0.8"/><rect x="1075.74" y="1830.30" width="19.81" height="21.10" fill="#e3f1e3" stroke="#ececec" stroke-width="0.8"/><rect x="1095.55" y="1703.70" width="19.81" height="21.10" fill="#f0f6f0" stroke="#ececec" stroke-width="0.8"/><rect x="1095.55" y="1724.80" width="19.81" height="21.10" fill="#a6dda6" stroke="#ececec" stroke-width="0.8"/><rect x="1095.55" y="1745.90" width="19.81" height="21.10" fill="#d3ecd3" stroke="#ececec" stroke-width="0.8"/><rect x="1095.55" y="1767.00" width="19.81" height="21.10" fill="#d8eed7" stroke="#ececec" stroke-width="0.8"/><rect x="1095.55" y="1788.10" width="19.81" height="21.10" fill="#d3ecd3" stroke="#ececec" stroke-width="0.8"/><rect x="1095.55" y="1809.20" width="19.81" height="21.10" fill="#e3f1e3" stroke="#ececec" stroke-width="0.8"/><rect x="1095.55" y="1830.30" width="19.81" height="21.10" fill="#e3f1e3" stroke="#ececec" stroke-width="0.8"/><rect x="1115.37" y="1703.70" width="19.81" height="21.10" fill="#f2f7f2" stroke="#ececec" stroke-width="0.8"/><rect x="1115.37" y="1724.80" width="19.81" height="21.10" fill="#e9f4e9" stroke="#ececec" stroke-width="0.8"/><rect x="1115.37" y="1745.90" width="19.81" height="21.10" fill="#d1ebd1" stroke="#ececec" stroke-width="0.8"/><rect x="1115.37" y="1767.00" width="19.81" height="21.10" fill="#ecf4ec" stroke="#ececec" stroke-width="0.8"/><rect x="1115.37" y="1788.10" width="19.81" height="21.10" fill="#d8eed7" stroke="#ececec" stroke-width="0.8"/><rect x="1115.37" y="1809.20" width="19.81" height="21.10" fill="#e9f4e9" stroke="#ececec" stroke-width="0.8"/><rect x="1115.37" y="1830.30" width="19.81" height="21.10" fill="#f2f7f2" stroke="#ececec" stroke-width="0.8"/><rect x="1135.18" y="1703.70" width="19.81" height="21.10" fill="#eef5ee" stroke="#ececec" stroke-width="0.8"/><rect x="1135.18" y="1724.80" width="19.81" height="21.10" fill="#ecf4ec" stroke="#ececec" stroke-width="0.8"/><rect x="1135.18" y="1745.90" width="19.81" height="21.10" fill="#a0db9f" stroke="#ececec" stroke-width="0.8"/><rect x="1135.18" y="1767.00" width="19.81" height="21.10" fill="#d8eed7" stroke="#ececec" stroke-width="0.8"/><rect x="1135.18" y="1788.10" width="19.81" height="21.10" fill="#e3f1e3" stroke="#ececec" stroke-width="0.8"/><rect x="1135.18" y="1809.20" width="19.81" height="21.10" fill="#6fca6e" stroke="#ececec" stroke-width="0.8"/><rect x="1135.18" y="1830.30" width="19.81" height="21.10" fill="#1aad19" stroke="#ececec" stroke-width="0.8"/><rect x="1154.99" y="1703.70" width="19.81" height="21.10" fill="#78cd77" stroke="#ececec" stroke-width="0.8"/><rect x="1154.99" y="1724.80" width="19.81" height="21.10" fill="#1aad19" stroke="#ececec" stroke-width="0.8"/><rect x="1154.99" y="1745.90" width="19.81" height="21.10" fill="#1aad19" stroke="#ececec" stroke-width="0.8"/><rect x="1154.99" y="1767.00" width="19.81" height="21.10" fill="#1aad19" stroke="#ececec" stroke-width="0.8"/><rect x="1154.99" y="1788.10" width="19.81" height="21.10" fill="#1aad19" stroke="#ececec" stroke-width="0.8"/><rect x="1154.99" y="1809.20" width="19.81" height="21.10" fill="#35b634" stroke="#ececec" stroke-width="0.8"/><rect x="1154.99" y="1830.30" width="19.81" height="21.10" fill="#a4dca4" stroke="#ececec" stroke-width="0.8"/><rect x="1174.81" y="1703.70" width="19.81" height="21.10" fill="#daeeda" stroke="#ececec" stroke-width="0.8"/><rect x="1174.81" y="1724.80" width="19.81" height="21.10" fill="#99d899" stroke="#ececec" stroke-width="0.8"/><rect x="1174.81" y="1745.90" width="19.81" height="21.10" fill="#c1e6c1" stroke="#ececec" stroke-width="0.8"/><rect x="1174.81" y="1767.00" width="19.81" height="21.10" fill="#cceacc" stroke="#ececec" stroke-width="0.8"/><rect x="1174.81" y="1788.10" width="19.81" height="21.10" fill="#d1ebd1" stroke="#ececec" stroke-width="0.8"/><rect x="1174.81" y="1809.20" width="19.81" height="21.10" fill="#d3ecd3" stroke="#ececec" stroke-width="0.8"/><rect x="1174.81" y="1830.30" width="19.81" height="21.10" fill="#daeeda" stroke="#ececec" stroke-width="0.8"/><rect x="1194.62" y="1703.70" width="19.81" height="21.10" fill="#d1ebd1" stroke="#ececec" stroke-width="0.8"/><rect x="1194.62" y="1724.80" width="19.81" height="21.10" fill="#c1e6c1" stroke="#ececec" stroke-width="0.8"/><rect x="1194.62" y="1745.90" width="19.81" height="21.10" fill="#a6dda6" stroke="#ececec" stroke-width="0.8"/><rect x="1194.62" y="1767.00" width="19.81" height="21.10" fill="#bbe4ba" stroke="#ececec" stroke-width="0.8"/><rect x="1194.62" y="1788.10" width="19.81" height="21.10" fill="#cceacc" stroke="#ececec" stroke-width="0.8"/><rect x="1194.62" y="1809.20" width="19.81" height="21.10" fill="#99d899" stroke="#ececec" stroke-width="0.8"/><rect x="1194.62" y="1830.30" width="19.81" height="21.10" fill="#e3f1e3" stroke="#ececec" stroke-width="0.8"/><rect x="1214.43" y="1703.70" width="19.81" height="21.10" fill="#e3f1e3" stroke="#ececec" stroke-width="0.8"/><rect x="1214.43" y="1724.80" width="19.81" height="21.10" fill="#abdeab" stroke="#ececec" stroke-width="0.8"/><rect x="1214.43" y="1745.90" width="19.81" height="21.10" fill="#99d899" stroke="#ececec" stroke-width="0.8"/><rect x="1214.43" y="1767.00" width="19.81" height="21.10" fill="#a6dda6" stroke="#ececec" stroke-width="0.8"/><rect x="1214.43" y="1788.10" width="19.81" height="21.10" fill="#a6dda6" stroke="#ececec" stroke-width="0.8"/><rect x="1214.43" y="1809.20" width="19.81" height="21.10" fill="#cceacc" stroke="#ececec" stroke-width="0.8"/><rect x="1214.43" y="1830.30" width="19.81" height="21.10" fill="#dcefdc" stroke="#ececec" stroke-width="0.8"/><rect x="1234.25" y="1703.70" width="19.81" height="21.10" fill="#e3f1e3" stroke="#ececec" stroke-width="0.8"/><rect x="1234.25" y="1724.80" width="19.81" height="21.10" fill="#bbe4ba" stroke="#ececec" stroke-width="0.8"/><rect x="1234.25" y="1745.90" width="19.81" height="21.10" fill="#95d794" stroke="#ececec" stroke-width="0.8"/><rect x="1234.25" y="1767.00" width="19.81" height="21.10" fill="#21af20" stroke="#ececec" stroke-width="0.8"/><rect x="1234.25" y="1788.10" width="19.81" height="21.10" fill="#1aad19" stroke="#ececec" stroke-width="0.8"/><rect x="1234.25" y="1809.20" width="19.81" height="21.10" fill="#52c051" stroke="#ececec" stroke-width="0.8"/><rect x="1234.25" y="1830.30" width="19.81" height="21.10" fill="#cceacc" stroke="#ececec" stroke-width="0.8"/><rect x="1254.06" y="1703.70" width="19.81" height="21.10" fill="#abdeab" stroke="#ececec" stroke-width="0.8"/><rect x="1254.06" y="1724.80" width="19.81" height="21.10" fill="#abdeab" stroke="#ececec" stroke-width="0.8"/><rect x="1254.06" y="1745.90" width="19.81" height="21.10" fill="#b2e1b1" stroke="#ececec" stroke-width="0.8"/><rect x="1254.06" y="1767.00" width="19.81" height="21.10" fill="#a4dca4" stroke="#ececec" stroke-width="0.8"/><rect x="1254.06" y="1788.10" width="19.81" height="21.10" fill="#95d794" stroke="#ececec" stroke-width="0.8"/><rect x="1254.06" y="1809.20" width="19.81" height="21.10" fill="#1aad19" stroke="#ececec" stroke-width="0.8"/><rect x="1254.06" y="1830.30" width="19.81" height="21.10" fill="#c8e8c8" stroke="#ececec" stroke-width="0.8"/><rect x="1273.87" y="1703.70" width="19.81" height="21.10" fill="#d3ecd3" stroke="#ececec" stroke-width="0.8"/><rect x="1273.87" y="1724.80" width="19.81" height="21.10" fill="#a0db9f" stroke="#ececec" stroke-width="0.8"/><rect x="1273.87" y="1745.90" width="19.81" height="21.10" fill="#90d590" stroke="#ececec" stroke-width="0.8"/><rect x="1273.87" y="1767.00" width="19.81" height="21.10" fill="#95d794" stroke="#ececec" stroke-width="0.8"/><rect x="1273.87" y="1788.10" width="19.81" height="21.10" fill="#8ad389" stroke="#ececec" stroke-width="0.8"/><rect x="1273.87" y="1809.20" width="19.81" height="21.10" fill="#95d794" stroke="#ececec" stroke-width="0.8"/><rect x="1273.87" y="1830.30" width="19.81" height="21.10" fill="#c3e7c3" stroke="#ececec" stroke-width="0.8"/><rect x="1293.69" y="1703.70" width="19.81" height="21.10" fill="#e3f1e3" stroke="#ececec" stroke-width="0.8"/><rect x="1293.69" y="1724.80" width="19.81" height="21.10" fill="#1aad19" stroke="#ececec" stroke-width="0.8"/><rect x="1293.69" y="1745.90" width="19.81" height="21.10" fill="#68c867" stroke="#ececec" stroke-width="0.8"/><rect x="1293.69" y="1767.00" width="19.81" height="21.10" fill="#1aad19" stroke="#ececec" stroke-width="0.8"/><rect x="1293.69" y="1788.10" width="19.81" height="21.10" fill="#85d185" stroke="#ececec" stroke-width="0.8"/><rect x="1293.69" y="1809.20" width="19.81" height="21.10" fill="#dcefdc" stroke="#ececec" stroke-width="0.8"/><path d="M283.2 1703.7L283.2 1788.1L263.4 1788.1L263.4 1851.4" stroke="#c2c2c2" stroke-width="1.600" stroke-dasharray="4 2" fill="none"/><path d="M362.5 1703.7L362.5 1767.0L342.7 1767.0L342.7 1851.4" stroke="#c2c2c2" stroke-width="1.600" stroke-dasharray="4 2" fill="none"/><path d="M441.7 1703.7L441.7 1809.2L421.9 1809.2L421.9 1851.4" stroke="#c2c2c2" stroke-width="1.600" stroke-dasharray="4 2" fill="none"/><path d="M540.8 1703.7L540.8 1724.8L521.0 1724.8L521.0 1851.4" stroke="#c2c2c2" stroke-width="1.600" stroke-dasharray="4 2" fill="none"/><path d="M620.0 1703.7L620.0 1767.0L600.2 1767.0L600.2 1851.4" stroke="#c2c2c2" stroke-width="1.600" stroke-dasharray="4 2" fill="none"/><path d="M699.3 1703.7L699.3 1830.3L679.5 1830.3L679.5 1851.4" stroke="#c2c2c2" stroke-width="1.600" stroke-dasharray="4 2" fill="none"/><path d="M798.4 1703.7L798.4 1745.9L778.5 1745.9L778.5 1851.4" stroke="#c2c2c2" stroke-width="1.600" stroke-dasharray="4 2" fill="none"/><path d="M877.6 1703.7L877.6 1745.9L857.8 1745.9L857.8 1851.4" stroke="#c2c2c2" stroke-width="1.600" stroke-dasharray="4 2" fill="none"/><path d="M956.9 1703.7L956.9 1809.2L937.0 1809.2L937.0 1851.4" stroke="#c2c2c2" stroke-width="1.600" stroke-dasharray="4 2" fill="none"/><path d="M1036.1 1703.7L1036.1 1851.4" stroke="#c2c2c2" stroke-width="1.600" stroke-dasharray="4 2" fill="none"/><path d="M1135.2 1703.7L1135.2 1767.0L1115.4 1767.0L1115.4 1851.4" stroke="#c2c2c2" stroke-width="1.600" stroke-dasharray="4 2" fill="none"/><path d="M1214.4 1703.7L1214.4 1809.2L1194.6 1809.2L1194.6 1851.4" stroke="#c2c2c2" stroke-width="1.600" stroke-dasharray="4 2" fill="none"/><path d="M1313.5 1703.7L1313.5 1724.8L1293.7 1724.8L1293.7 1851.4" stroke="#c2c2c2" stroke-width="1.600" stroke-dasharray="4 2" fill="none"/><path d="M1313.5 1703.7L1313.5 1830.3L1293.7 1830.3L1293.7 1851.4" stroke="#c2c2c2" stroke-width="1.600" stroke-dasharray="4 2" fill="none"/><path d="M283.2 1703.7H1313.5" stroke="#c2c2c2" stroke-width="1.600" stroke-dasharray="4 2" fill="none"/><path d="M263.4 1851.4H1293.7" stroke="#c2c2c2" stroke-width="1.600" stroke-dasharray="4 2" fill="none"/><text x="313" y="1695.500" font-size="12" fill="#222" text-anchor="middle">8月</text><text x="392" y="1695.500" font-size="12" fill="#222" text-anchor="middle">9月</text><text x="481" y="1695.500" font-size="12" fill="#222" text-anchor="middle">10月</text><text x="570" y="1695.500" font-size="12" fill="#222" text-anchor="middle">11月</text><text x="649" y="1695.500" font-size="12" fill="#222" text-anchor="middle">12月</text><text x="738" y="1695.500" font-size="12" fill="#222" text-anchor="middle">1月</text><text x="827" y="1695.500" font-size="12" fill="#222" text-anchor="middle">2月</text><text x="907" y="1695.500" font-size="12" fill="#222" text-anchor="middle">3月</text><text x="986" y="1695.500" font-size="12" fill="#222" text-anchor="middle">4月</text><text x="1085" y="1695.500" font-size="12" fill="#222" text-anchor="middle">5月</text><text x="1164" y="1695.500" font-size="12" fill="#222" text-anchor="middle">6月</text><text x="1253" y="1695.500" font-size="12" fill="#222" text-anchor="middle">7月</text><text x="1302" y="1695.500" font-size="12" fill="#222" text-anchor="middle">8月</text><text x="241.500" y="1717.8" font-size="12" fill="#666" text-anchor="middle">周日</text><text x="241.500" y="1738.9" font-size="12" fill="#666" text-anchor="middle">周一</text><text x="241.500" y="1760.0" font-size="12" fill="#666" text-anchor="middle">周二</text><text x="241.500" y="1781.1" font-size="12" fill="#666" text-anchor="middle">周三</text><text x="241.500" y="1802.2" font-size="12" fill="#666" text-anchor="middle">周四</text><text x="241.500" y="1823.2" font-size="12" fill="#666" text-anchor="middle">周五</text><text x="241.500" y="1844.4" font-size="12" fill="#666" text-anchor="middle">周六</text></svg>
<div class="card" style="left:1345px;top:102px;width:555px;height:90px"></div>
<div class="a" style="left:1357px;top:114px;width:124px;height:63.5px;background:#f8f8f8;border-radius:2px;"></div>
<svg style="left:1408.0px;top:121.8px;color:#999593" width="22" height="22" viewBox="0 0 24 24" fill="none" stroke="currentColor" stroke-width="2.15" stroke-linecap="round" stroke-linejoin="round" ><path d="M5.500 1.500h16.500v21h-16.500zM2 6.500h3.500M2 12h3.500M2 17.500h3.500"/><circle cx="13.700" cy="9.600" r="3.500"/><path d="M8.500 19a5.200 5.200 0 0 1 10.400 0"/></svg>
<div class="t" style="left:1357px;top:150.0px;height:22px;line-height:22px;font-size:14px;color:#999;width:124px;text-align:center;">通讯录</div>
<div class="a" style="left:1493px;top:114px;width:124px;height:63.5px;background:#f8f8f8;border-radius:2px;"></div>
<svg style="left:1544.0px;top:121.8px;color:#999593" width="22" height="22" viewBox="0 0 24 24" fill="none" stroke="currentColor" stroke-width="2.15" stroke-linecap="round" stroke-linejoin="round" ><path d="M2 4.500h20v18.200h-20zM2 10h20M7 1.300v5.500M17 1.300v5.500"/><path d="M6.500 15.300l2.200 2.200 3.300-3.800M14.200 16h4.500"/></svg>
<div class="t" style="left:1493px;top:150.0px;height:22px;line-height:22px;font-size:14px;color:#999;width:124px;text-align:center;">日程安排</div>
<div class="a" style="left:1629px;top:114px;width:123px;height:63.5px;background:#f8f8f8;border-radius:2px;"></div>
<svg style="left:1679.5px;top:121.8px;color:#999593" width="22" height="22" viewBox="0 0 24 24" fill="none" stroke="currentColor" stroke-width="2.15" stroke-linecap="round" stroke-linejoin="round" ><path d="M2.200 1.500h19.600v21h-19.600z"/><path d="M7 7.500h.5M11.700 7.500h.5M16.400 7.500h.5" stroke-width="2.400"/><path d="M6.500 12.800h11M6.500 17.500h7"/></svg>
<div class="t" style="left:1629px;top:150.0px;height:22px;line-height:22px;font-size:14px;color:#999;width:123px;text-align:center;">+工作汇报</div>
<div class="a" style="left:1764px;top:114px;width:124px;height:63.5px;background:#f8f8f8;border-radius:2px;"></div>
<svg style="left:1815.0px;top:121.8px;color:#999593" width="22" height="22" viewBox="0 0 24 24" fill="none" stroke="currentColor" stroke-width="2.15" stroke-linecap="round" stroke-linejoin="round" ><path d="M19.500 20.500V1.500h-17.300v21h20.300"/><path d="M2.200 6.200h17.300M6 11h9.500M6 14.800h9.500M6 18.600h5"/></svg>
<div class="t" style="left:1764px;top:150.0px;height:22px;line-height:22px;font-size:14px;color:#999;width:124px;text-align:center;">+工作记录</div>
<div class="card" style="left:1345px;top:204px;width:555px;height:604px"></div>
<div class="t" style="left:1357px;top:217.0px;height:26px;line-height:26px;font-size:18px;color:#333;font-weight:bold;">系统信息</div>
<div class="tb" style="left:1360px;top:255px;width:525px;height:538px;background:#fff"></div>
<div class="a" style="left:1361px;top:256px;width:523px;height:30px;background:#f8f8f8;"></div>
<div class="t" style="left:1371px;top:261.0px;height:20px;line-height:20px;font-size:12px;color:#e8392d;">提醒：发现app目录下的install文件夹没删除，为了系统的安全,请手动去删除。</div>
<div class="hl" style="left:1360px;top:286px;width:525px"></div>
<div class="hl" style="left:1360px;top:317px;width:525px"></div>
<div class="hl" style="left:1360px;top:348px;width:525px"></div>
<div class="hl" style="left:1360px;top:379px;width:525px"></div>
<div class="hl" style="left:1360px;top:410px;width:525px"></div>
<div class="hl" style="left:1360px;top:441px;width:525px"></div>
<div class="hl" style="left:1360px;top:472px;width:525px"></div>
<div class="hl" style="left:1360px;top:505px;width:525px"></div>
<div class="hl" style="left:1360px;top:536px;width:525px"></div>
<div class="a" style="left:1361px;top:287px;width:111px;height:505px;background:#fafafa;"></div>
<div class="hl" style="left:1360px;top:317px;width:112px"></div>
<div class="hl" style="left:1360px;top:348px;width:112px"></div>
<div class="hl" style="left:1360px;top:379px;width:112px"></div>
<div class="hl" style="left:1360px;top:410px;width:112px"></div>
<div class="hl" style="left:1360px;top:441px;width:112px"></div>
<div class="hl" style="left:1360px;top:472px;width:112px"></div>
<div class="hl" style="left:1360px;top:505px;width:112px"></div>
<div class="hl" style="left:1360px;top:536px;width:112px"></div>
<div class="vl" style="left:1471px;top:286px;height:506px"></div>
<div class="a" style="left:1618px;top:287px;width:110px;height:61px;background:#fafafa;"></div>
<div class="hl" style="left:1617px;top:317px;width:112px"></div>
<div class="vl" style="left:1617px;top:286px;height:62px"></div>
<div class="vl" style="left:1728px;top:286px;height:62px"></div>
<div class="t" style="left:1361px;top:291.5px;height:20px;line-height:20px;font-size:12px;color:#999;width:101px;text-align:right;">服务器系统</div>
<div class="t" style="left:1361px;top:322.5px;height:20px;line-height:20px;font-size:12px;color:#999;width:101px;text-align:right;">上传附件限制</div>
<div class="t" style="left:1361px;top:353.5px;height:20px;line-height:20px;font-size:12px;color:#999;width:101px;text-align:right;">勾股OA</div>
<div class="t" style="left:1361px;top:384.5px;height:20px;line-height:20px;font-size:12px;color:#999;width:101px;text-align:right;">ThinkPHP版本</div>
<div class="t" style="left:1361px;top:415.5px;height:20px;line-height:20px;font-size:12px;color:#999;width:101px;text-align:right;">Layui版本</div>
<div class="t" style="left:1361px;top:446.5px;height:20px;line-height:20px;font-size:12px;color:#999;width:101px;text-align:right;">合作联系微信号</div>
<div class="t" style="left:1361px;top:478.5px;height:20px;line-height:20px;font-size:12px;color:#999;width:101px;text-align:right;">QQ交流群</div>
<div class="t" style="left:1361px;top:510.5px;height:20px;line-height:20px;font-size:12px;color:#999;width:101px;text-align:right;">同系列开源软件</div>
<div class="t" style="left:1361px;top:653.5px;height:20px;line-height:20px;font-size:12px;color:#999;width:101px;text-align:right;">给作者加鸡腿</div>
<div class="t" style="left:1482px;top:291.5px;height:20px;line-height:20px;font-size:12px;color:#666;">Linux</div>
<div class="t" style="left:1482px;top:322.5px;height:20px;line-height:20px;font-size:12px;color:#666;">100M</div>
<div class="t" style="left:1617px;top:291.5px;height:20px;line-height:20px;font-size:12px;color:#999;width:101px;text-align:right;">PHP版本</div>
<div class="t" style="left:1617px;top:322.5px;height:20px;line-height:20px;font-size:12px;color:#999;width:101px;text-align:right;">执行时间限制</div>
<div class="t" style="left:1739px;top:291.5px;height:20px;line-height:20px;font-size:12px;color:#666;">7.4.30</div>
<div class="t" style="left:1739px;top:322.5px;height:20px;line-height:20px;font-size:12px;color:#666;">300秒</div>
<div class="t" style="left:1482px;top:353.5px;height:20px;line-height:20px;font-size:12px;color:#666;">4.0.81</div>
<div class="t" style="left:1482px;top:384.5px;height:20px;line-height:20px;font-size:12px;color:#666;">6.0.8</div>
<div class="t" style="left:1482px;top:415.5px;height:20px;line-height:20px;font-size:12px;color:#666;">2.7.6</div>
<div class="badge" style="left:1524px;top:354.5px;width:77px;height:18px;line-height:18px;background:#1e9fff">勾股OA文档</div>
<div class="badge" style="left:1517px;top:385.5px;width:58px;height:18px;line-height:18px;background:#1e9fff">TP6文档</div>
<div class="badge" style="left:1517px;top:416.5px;width:65px;height:18px;line-height:18px;background:#1e9fff">Layui文档</div>
<div class="t" style="left:1482px;top:446.5px;height:20px;line-height:20px;font-size:12px;color:#666;">hdm588，业务合作、功能定制请备注</div>
<div class="t" style="left:1482px;top:478.0px;height:20px;line-height:20px;font-size:12px;color:#666;">搜Q群：24641076，或点击</div>
<div class="a" style="left:1632px;top:478px;width:90px;height:22px;border:1px solid #4aa3e6;border-radius:2px;background:linear-gradient(#3aa0ee,#1e86dc)"></div>
<div class="a" style="left:1633px;top:479px;width:22px;height:20px;background:#e8f2fb"></div>
<svg style="left:1634px;top:480px" width="20" height="18" viewBox="0 0 20 18"><circle cx="7" cy="6.500" r="4" fill="#f6c9a0" stroke="#8a4b1c" stroke-width=".8"/><path d="M3 5.500a4 4 0 0 1 8 0c-2 .5-3-1.500-4-2-1 1.500-3 2-4 2z" fill="#8a4b1c"/><circle cx="13.500" cy="7.500" r="3.600" fill="#f6c9a0" stroke="#8a4b1c" stroke-width=".8"/><path d="M9.800 7a3.700 3.700 0 0 1 7.400 0c-2 .4-3-1-3.700-1.800-1 1-2.500 1.800-3.700 1.800z" fill="#c0392b"/><path d="M1.500 17a5.500 5.500 0 0 1 11 0z" fill="#5fae4a"/><path d="M9 17a4.800 4.800 0 0 1 9.500 0z" fill="#3b8fd6"/></svg>
<div class="t" style="left:1658px;top:478.5px;height:21px;line-height:21px;font-size:13px;color:#fff;">加入QQ群</div>
<div class="badge" style="left:1482px;top:511.5px;width:63px;height:18px;line-height:18px;background:#1e9fff">勾股CMS</div>
<div class="badge" style="left:1553px;top:511.5px;width:69px;height:18px;line-height:18px;background:#1e9fff">勾股BLOG</div>
<div class="badge" style="left:1630px;top:511.5px;width:61px;height:18px;line-height:18px;background:#1e9fff">勾股DEV</div>
<div class="badge" style="left:1699px;top:511.5px;width:75px;height:18px;line-height:18px;background:#1e9fff">勾股ADMIN</div>
<svg style="left:1429px;top:636.2px" width="16" height="16" viewBox="0 0 16 16"><path d="M1.200 2.500L2.500 1.200L6.300 5L5 6.300Z" fill="#fff" stroke="#1a1008" stroke-width=".8" stroke-linejoin="round"/><path d="M4.700 4.700C6.600 5.500 8.400 5.200 10.600 6.300A4.300 4.300 0 1 1 6.300 10.600C5.200 8.400 5.500 6.600 4.700 4.700Z" fill="#d5570f" stroke="#1a1008" stroke-width=".9"/></svg>
<svg style="left:1445.2px;top:636.2px" width="16" height="16" viewBox="0 0 16 16"><path d="M1.200 2.500L2.500 1.200L6.300 5L5 6.300Z" fill="#fff" stroke="#1a1008" stroke-width=".8" stroke-linejoin="round"/><path d="M4.700 4.700C6.600 5.500 8.400 5.200 10.600 6.300A4.300 4.300 0 1 1 6.300 10.600C5.200 8.400 5.500 6.600 4.700 4.700Z" fill="#d5570f" stroke="#1a1008" stroke-width=".9"/></svg>
<svg style="left:1429px;top:676.3px" width="16" height="16" viewBox="0 0 16 16"><path d="M1.200 2.500L2.500 1.200L6.300 5L5 6.300Z" fill="#fff" stroke="#1a1008" stroke-width=".8" stroke-linejoin="round"/><path d="M4.700 4.700C6.600 5.500 8.400 5.200 10.600 6.300A4.300 4.300 0 1 1 6.300 10.600C5.200 8.400 5.500 6.600 4.700 4.700Z" fill="#d5570f" stroke="#1a1008" stroke-width=".9"/></svg>
<svg style="left:1445.2px;top:676.3px" width="16" height="16" viewBox="0 0 16 16"><path d="M1.200 2.500L2.500 1.200L6.300 5L5 6.300Z" fill="#fff" stroke="#1a1008" stroke-width=".8" stroke-linejoin="round"/><path d="M4.700 4.700C6.600 5.500 8.400 5.200 10.600 6.300A4.300 4.300 0 1 1 6.300 10.600C5.200 8.400 5.500 6.600 4.700 4.700Z" fill="#d5570f" stroke="#1a1008" stroke-width=".9"/></svg>
<svg style="left:0;top:0" width="1920" height="1886" viewBox="0 0 1920 1886" font-family="Liberation Sans, sans-serif"><rect x="1482" y="542" width="392" height="245" fill="#fff"/><path d="M1487 546V760M1673 546V760" stroke="#e6e6e6" stroke-width="1"/><path d="M1487 545H1673" stroke="#e9e9e9" stroke-width="1" stroke-dasharray="2 3"/><circle cx="1487" cy="545" r="1.300" fill="#bbb"/><circle cx="1673" cy="545" r="1.300" fill="#bbb"/><path d="M1683 546V760M1869 546V760" stroke="#e6e6e6" stroke-width="1"/><path d="M1683 545H1869" stroke="#e9e9e9" stroke-width="1" stroke-dasharray="2 3"/><circle cx="1683" cy="545" r="1.300" fill="#bbb"/><circle cx="1869" cy="545" r="1.300" fill="#bbb"/><path d="M1505.50 558.70h25.10v3.59h-25.10zM1534.18 558.70h17.93v3.59h-17.93zM1555.70 558.70h7.17v3.59h-7.17zM1573.62 558.70h3.59v3.59h-3.59zM1580.79 558.70h3.59v3.59h-3.59zM1587.96 558.70h14.34v3.59h-14.34zM1605.89 558.70h3.59v3.59h-3.59zM1616.65 558.70h3.59v3.59h-3.59zM1627.40 558.70h25.10v3.59h-25.10zM1505.50 562.29h3.59v3.59h-3.59zM1527.01 562.29h3.59v3.59h-3.59zM1534.18 562.29h3.59v3.59h-3.59zM1541.35 562.29h7.17v3.59h-7.17zM1552.11 562.29h10.76v3.59h-10.76zM1577.21 562.29h3.59v3.59h-3.59zM1591.55 562.29h3.59v3.59h-3.59zM1602.30 562.29h3.59v3.59h-3.59zM1609.48 562.29h3.59v3.59h-3.59zM1627.40 562.29h3.59v3.59h-3.59zM1648.91 562.29h3.59v3.59h-3.59zM1505.50 565.87h3.59v3.59h-3.59zM1512.67 565.87h10.76v3.59h-10.76zM1527.01 565.87h3.59v3.59h-3.59zM1548.52 565.87h10.76v3.59h-10.76zM1566.45 565.87h17.93v3.59h-17.93zM1587.96 565.87h14.34v3.59h-14.34zM1627.40 565.87h3.59v3.59h-3.59zM1634.57 565.87h10.76v3.59h-10.76zM1648.91 565.87h3.59v3.59h-3.59zM1505.50 569.46h3.59v3.59h-3.59zM1512.67 569.46h10.76v3.59h-10.76zM1527.01 569.46h3.59v3.59h-3.59zM1534.18 569.46h14.34v3.59h-14.34zM1555.70 569.46h17.93v3.59h-17.93zM1580.79 569.46h21.51v3.59h-21.51zM1605.89 569.46h7.17v3.59h-7.17zM1620.23 569.46h3.59v3.59h-3.59zM1627.40 569.46h3.59v3.59h-3.59zM1634.57 569.46h10.76v3.59h-10.76zM1648.91 569.46h3.59v3.59h-3.59zM1505.50 573.04h3.59v3.59h-3.59zM1512.67 573.04h10.76v3.59h-10.76zM1527.01 573.04h3.59v3.59h-3.59zM1548.52 573.04h3.59v3.59h-3.59zM1555.70 573.04h17.93v3.59h-17.93zM1580.79 573.04h3.59v3.59h-3.59zM1595.13 573.04h17.93v3.59h-17.93zM1627.40 573.04h3.59v3.59h-3.59zM1634.57 573.04h10.76v3.59h-10.76zM1648.91 573.04h3.59v3.59h-3.59zM1505.50 576.63h3.59v3.59h-3.59zM1527.01 576.63h3.59v3.59h-3.59zM1541.35 576.63h10.76v3.59h-10.76zM1559.28 576.63h3.59v3.59h-3.59zM1573.62 576.63h3.59v3.59h-3.59zM1580.79 576.63h7.17v3.59h-7.17zM1602.30 576.63h3.59v3.59h-3.59zM1613.06 576.63h10.76v3.59h-10.76zM1627.40 576.63h3.59v3.59h-3.59zM1648.91 576.63h3.59v3.59h-3.59zM1505.50 580.21h25.10v3.59h-25.10zM1534.18 580.21h10.76v3.59h-10.76zM1548.52 580.21h7.17v3.59h-7.17zM1562.87 580.21h3.59v3.59h-3.59zM1577.21 580.21h3.59v3.59h-3.59zM1584.38 580.21h7.17v3.59h-7.17zM1609.48 580.21h3.59v3.59h-3.59zM1627.40 580.21h25.10v3.59h-25.10zM1534.18 583.80h7.17v3.59h-7.17zM1552.11 583.80h3.59v3.59h-3.59zM1562.87 583.80h3.59v3.59h-3.59zM1573.62 583.80h3.59v3.59h-3.59zM1580.79 583.80h7.17v3.59h-7.17zM1595.13 583.80h7.17v3.59h-7.17zM1605.89 583.80h10.76v3.59h-10.76zM1620.23 583.80h3.59v3.59h-3.59zM1512.67 587.38h10.76v3.59h-10.76zM1527.01 587.38h10.76v3.59h-10.76zM1544.94 587.38h7.17v3.59h-7.17zM1562.87 587.38h7.17v3.59h-7.17zM1573.62 587.38h7.17v3.59h-7.17zM1591.55 587.38h3.59v3.59h-3.59zM1598.72 587.38h3.59v3.59h-3.59zM1605.89 587.38h7.17v3.59h-7.17zM1620.23 587.38h7.17v3.59h-7.17zM1630.99 587.38h21.51v3.59h-21.51zM1505.50 590.97h3.59v3.59h-3.59zM1512.67 590.97h3.59v3.59h-3.59zM1519.84 590.97h17.93v3.59h-17.93zM1544.94 590.97h7.17v3.59h-7.17zM1555.70 590.97h3.59v3.59h-3.59zM1562.87 590.97h7.17v3.59h-7.17zM1573.62 590.97h3.59v3.59h-3.59zM1587.96 590.97h3.59v3.59h-3.59zM1602.30 590.97h17.93v3.59h-17.93zM1623.82 590.97h10.76v3.59h-10.76zM1645.33 590.97h7.17v3.59h-7.17zM1505.50 594.55h17.93v3.59h-17.93zM1534.18 594.55h3.59v3.59h-3.59zM1541.35 594.55h17.93v3.59h-17.93zM1562.87 594.55h3.59v3.59h-3.59zM1570.04 594.55h28.68v3.59h-28.68zM1620.23 594.55h7.17v3.59h-7.17zM1630.99 594.55h3.59v3.59h-3.59zM1641.74 594.55h3.59v3.59h-3.59zM1516.26 598.14h3.59v3.59h-3.59zM1552.11 598.14h17.93v3.59h-17.93zM1587.96 598.14h7.17v3.59h-7.17zM1613.06 598.14h3.59v3.59h-3.59zM1620.23 598.14h10.76v3.59h-10.76zM1634.57 598.14h3.59v3.59h-3.59zM1645.33 598.14h7.17v3.59h-7.17zM1505.50 601.72h3.59v3.59h-3.59zM1523.43 601.72h10.76v3.59h-10.76zM1537.77 601.72h3.59v3.59h-3.59zM1544.94 601.72h10.76v3.59h-10.76zM1566.45 601.72h3.59v3.59h-3.59zM1573.62 601.72h10.76v3.59h-10.76zM1587.96 601.72h3.59v3.59h-3.59zM1598.72 601.72h7.17v3.59h-7.17zM1613.06 601.72h10.76v3.59h-10.76zM1627.40 601.72h3.59v3.59h-3.59zM1634.57 601.72h3.59v3.59h-3.59zM1645.33 601.72h3.59v3.59h-3.59zM1516.26 605.31h3.59v3.59h-3.59zM1523.43 605.31h32.27v3.59h-32.27zM1559.28 605.31h3.59v3.59h-3.59zM1570.04 605.31h3.59v3.59h-3.59zM1584.38 605.31h10.76v3.59h-10.76zM1602.30 605.31h17.93v3.59h-17.93zM1623.82 605.31h3.59v3.59h-3.59zM1630.99 605.31h7.17v3.59h-7.17zM1641.74 605.31h7.17v3.59h-7.17zM1530.60 608.90h3.59v3.59h-3.59zM1537.77 608.90h3.59v3.59h-3.59zM1548.52 608.90h7.17v3.59h-7.17zM1559.28 608.90h14.34v3.59h-14.34zM1580.79 608.90h3.59v3.59h-3.59zM1587.96 608.90h3.59v3.59h-3.59zM1595.13 608.90h14.34v3.59h-14.34zM1613.06 608.90h7.17v3.59h-7.17zM1627.40 608.90h25.10v3.59h-25.10zM1505.50 612.48h3.59v3.59h-3.59zM1519.84 612.48h7.17v3.59h-7.17zM1530.60 612.48h14.34v3.59h-14.34zM1548.52 612.48h3.59v3.59h-3.59zM1605.89 612.48h3.59v3.59h-3.59zM1613.06 612.48h7.17v3.59h-7.17zM1634.57 612.48h10.76v3.59h-10.76zM1519.84 616.07h3.59v3.59h-3.59zM1527.01 616.07h3.59v3.59h-3.59zM1534.18 616.07h3.59v3.59h-3.59zM1544.94 616.07h10.76v3.59h-10.76zM1609.48 616.07h10.76v3.59h-10.76zM1627.40 616.07h10.76v3.59h-10.76zM1641.74 616.07h7.17v3.59h-7.17zM1509.09 619.65h14.34v3.59h-14.34zM1527.01 619.65h3.59v3.59h-3.59zM1541.35 619.65h3.59v3.59h-3.59zM1548.52 619.65h3.59v3.59h-3.59zM1555.70 619.65h3.59v3.59h-3.59zM1598.72 619.65h7.17v3.59h-7.17zM1609.48 619.65h14.34v3.59h-14.34zM1641.74 619.65h7.17v3.59h-7.17zM1509.09 623.24h3.59v3.59h-3.59zM1516.26 623.24h25.10v3.59h-25.10zM1544.94 623.24h3.59v3.59h-3.59zM1552.11 623.24h7.17v3.59h-7.17zM1598.72 623.24h3.59v3.59h-3.59zM1609.48 623.24h10.76v3.59h-10.76zM1623.82 623.24h3.59v3.59h-3.59zM1634.57 623.24h7.17v3.59h-7.17zM1648.91 623.24h3.59v3.59h-3.59zM1509.09 626.82h10.76v3.59h-10.76zM1534.18 626.82h10.76v3.59h-10.76zM1552.11 626.82h7.17v3.59h-7.17zM1598.72 626.82h3.59v3.59h-3.59zM1605.89 626.82h7.17v3.59h-7.17zM1616.65 626.82h10.76v3.59h-10.76zM1630.99 626.82h3.59v3.59h-3.59zM1645.33 626.82h7.17v3.59h-7.17zM1505.50 630.41h7.17v3.59h-7.17zM1516.26 630.41h10.76v3.59h-10.76zM1544.94 630.41h3.59v3.59h-3.59zM1552.11 630.41h3.59v3.59h-3.59zM1602.30 630.41h3.59v3.59h-3.59zM1616.65 630.41h7.17v3.59h-7.17zM1634.57 630.41h14.34v3.59h-14.34zM1512.67 633.99h3.59v3.59h-3.59zM1519.84 633.99h7.17v3.59h-7.17zM1534.18 633.99h3.59v3.59h-3.59zM1544.94 633.99h14.34v3.59h-14.34zM1602.30 633.99h10.76v3.59h-10.76zM1620.23 633.99h7.17v3.59h-7.17zM1630.99 633.99h10.76v3.59h-10.76zM1645.33 633.99h3.59v3.59h-3.59zM1505.50 637.58h7.17v3.59h-7.17zM1519.84 637.58h7.17v3.59h-7.17zM1530.60 637.58h7.17v3.59h-7.17zM1541.35 637.58h3.59v3.59h-3.59zM1548.52 637.58h3.59v3.59h-3.59zM1555.70 637.58h3.59v3.59h-3.59zM1605.89 637.58h7.17v3.59h-7.17zM1620.23 637.58h7.17v3.59h-7.17zM1634.57 637.58h7.17v3.59h-7.17zM1645.33 637.58h3.59v3.59h-3.59zM1512.67 641.16h3.59v3.59h-3.59zM1519.84 641.16h7.17v3.59h-7.17zM1534.18 641.16h10.76v3.59h-10.76zM1548.52 641.16h10.76v3.59h-10.76zM1598.72 641.16h7.17v3.59h-7.17zM1609.48 641.16h3.59v3.59h-3.59zM1616.65 641.16h10.76v3.59h-10.76zM1630.99 641.16h7.17v3.59h-7.17zM1645.33 641.16h7.17v3.59h-7.17zM1505.50 644.75h21.51v3.59h-21.51zM1530.60 644.75h3.59v3.59h-3.59zM1537.77 644.75h3.59v3.59h-3.59zM1552.11 644.75h3.59v3.59h-3.59zM1602.30 644.75h3.59v3.59h-3.59zM1613.06 644.75h7.17v3.59h-7.17zM1623.82 644.75h3.59v3.59h-3.59zM1630.99 644.75h3.59v3.59h-3.59zM1638.16 644.75h3.59v3.59h-3.59zM1648.91 644.75h3.59v3.59h-3.59zM1505.50 648.33h3.59v3.59h-3.59zM1512.67 648.33h14.34v3.59h-14.34zM1537.77 648.33h3.59v3.59h-3.59zM1544.94 648.33h3.59v3.59h-3.59zM1555.70 648.33h3.59v3.59h-3.59zM1602.30 648.33h3.59v3.59h-3.59zM1609.48 648.33h7.17v3.59h-7.17zM1620.23 648.33h3.59v3.59h-3.59zM1627.40 648.33h3.59v3.59h-3.59zM1645.33 648.33h7.17v3.59h-7.17zM1505.50 651.92h7.17v3.59h-7.17zM1516.26 651.92h3.59v3.59h-3.59zM1527.01 651.92h7.17v3.59h-7.17zM1537.77 651.92h21.51v3.59h-21.51zM1566.45 651.92h3.59v3.59h-3.59zM1573.62 651.92h7.17v3.59h-7.17zM1584.38 651.92h10.76v3.59h-10.76zM1605.89 651.92h10.76v3.59h-10.76zM1623.82 651.92h3.59v3.59h-3.59zM1630.99 651.92h3.59v3.59h-3.59zM1641.74 651.92h3.59v3.59h-3.59zM1648.91 651.92h3.59v3.59h-3.59zM1509.09 655.50h10.76v3.59h-10.76zM1523.43 655.50h3.59v3.59h-3.59zM1534.18 655.50h7.17v3.59h-7.17zM1555.70 655.50h14.34v3.59h-14.34zM1580.79 655.50h3.59v3.59h-3.59zM1591.55 655.50h3.59v3.59h-3.59zM1598.72 655.50h21.51v3.59h-21.51zM1634.57 655.50h3.59v3.59h-3.59zM1641.74 655.50h3.59v3.59h-3.59zM1505.50 659.09h3.59v3.59h-3.59zM1516.26 659.09h3.59v3.59h-3.59zM1523.43 659.09h10.76v3.59h-10.76zM1544.94 659.09h3.59v3.59h-3.59zM1552.11 659.09h7.17v3.59h-7.17zM1577.21 659.09h3.59v3.59h-3.59zM1591.55 659.09h3.59v3.59h-3.59zM1602.30 659.09h7.17v3.59h-7.17zM1613.06 659.09h3.59v3.59h-3.59zM1620.23 659.09h10.76v3.59h-10.76zM1634.57 659.09h14.34v3.59h-14.34zM1516.26 662.68h3.59v3.59h-3.59zM1523.43 662.68h3.59v3.59h-3.59zM1537.77 662.68h3.59v3.59h-3.59zM1552.11 662.68h14.34v3.59h-14.34zM1584.38 662.68h10.76v3.59h-10.76zM1598.72 662.68h21.51v3.59h-21.51zM1623.82 662.68h7.17v3.59h-7.17zM1645.33 662.68h7.17v3.59h-7.17zM1505.50 666.26h3.59v3.59h-3.59zM1512.67 666.26h3.59v3.59h-3.59zM1523.43 666.26h3.59v3.59h-3.59zM1530.60 666.26h3.59v3.59h-3.59zM1537.77 666.26h10.76v3.59h-10.76zM1555.70 666.26h10.76v3.59h-10.76zM1570.04 666.26h10.76v3.59h-10.76zM1584.38 666.26h3.59v3.59h-3.59zM1591.55 666.26h7.17v3.59h-7.17zM1602.30 666.26h7.17v3.59h-7.17zM1613.06 666.26h3.59v3.59h-3.59zM1630.99 666.26h10.76v3.59h-10.76zM1645.33 666.26h3.59v3.59h-3.59zM1505.50 669.85h10.76v3.59h-10.76zM1523.43 669.85h3.59v3.59h-3.59zM1530.60 669.85h7.17v3.59h-7.17zM1552.11 669.85h10.76v3.59h-10.76zM1573.62 669.85h7.17v3.59h-7.17zM1587.96 669.85h7.17v3.59h-7.17zM1598.72 669.85h10.76v3.59h-10.76zM1616.65 669.85h14.34v3.59h-14.34zM1634.57 669.85h10.76v3.59h-10.76zM1505.50 673.43h3.59v3.59h-3.59zM1512.67 673.43h7.17v3.59h-7.17zM1530.60 673.43h7.17v3.59h-7.17zM1541.35 673.43h17.93v3.59h-17.93zM1573.62 673.43h7.17v3.59h-7.17zM1584.38 673.43h3.59v3.59h-3.59zM1595.13 673.43h3.59v3.59h-3.59zM1605.89 673.43h7.17v3.59h-7.17zM1620.23 673.43h25.10v3.59h-25.10zM1648.91 673.43h3.59v3.59h-3.59zM1534.18 677.02h3.59v3.59h-3.59zM1544.94 677.02h3.59v3.59h-3.59zM1555.70 677.02h7.17v3.59h-7.17zM1566.45 677.02h3.59v3.59h-3.59zM1573.62 677.02h3.59v3.59h-3.59zM1587.96 677.02h3.59v3.59h-3.59zM1616.65 677.02h7.17v3.59h-7.17zM1634.57 677.02h7.17v3.59h-7.17zM1645.33 677.02h7.17v3.59h-7.17zM1505.50 680.60h25.10v3.59h-25.10zM1534.18 680.60h3.59v3.59h-3.59zM1548.52 680.60h3.59v3.59h-3.59zM1555.70 680.60h10.76v3.59h-10.76zM1577.21 680.60h3.59v3.59h-3.59zM1584.38 680.60h3.59v3.59h-3.59zM1591.55 680.60h3.59v3.59h-3.59zM1605.89 680.60h7.17v3.59h-7.17zM1616.65 680.60h7.17v3.59h-7.17zM1627.40 680.60h3.59v3.59h-3.59zM1634.57 680.60h17.93v3.59h-17.93zM1505.50 684.19h3.59v3.59h-3.59zM1527.01 684.19h3.59v3.59h-3.59zM1534.18 684.19h3.59v3.59h-3.59zM1544.94 684.19h3.59v3.59h-3.59zM1559.28 684.19h3.59v3.59h-3.59zM1570.04 684.19h7.17v3.59h-7.17zM1584.38 684.19h14.34v3.59h-14.34zM1602.30 684.19h7.17v3.59h-7.17zM1616.65 684.19h7.17v3.59h-7.17zM1634.57 684.19h3.59v3.59h-3.59zM1645.33 684.19h3.59v3.59h-3.59zM1505.50 687.77h3.59v3.59h-3.59zM1512.67 687.77h10.76v3.59h-10.76zM1527.01 687.77h3.59v3.59h-3.59zM1534.18 687.77h21.51v3.59h-21.51zM1562.87 687.77h3.59v3.59h-3.59zM1570.04 687.77h3.59v3.59h-3.59zM1584.38 687.77h7.17v3.59h-7.17zM1595.13 687.77h3.59v3.59h-3.59zM1605.89 687.77h3.59v3.59h-3.59zM1620.23 687.77h21.51v3.59h-21.51zM1648.91 687.77h3.59v3.59h-3.59zM1505.50 691.36h3.59v3.59h-3.59zM1512.67 691.36h10.76v3.59h-10.76zM1527.01 691.36h3.59v3.59h-3.59zM1541.35 691.36h3.59v3.59h-3.59zM1548.52 691.36h3.59v3.59h-3.59zM1555.70 691.36h3.59v3.59h-3.59zM1573.62 691.36h10.76v3.59h-10.76zM1595.13 691.36h3.59v3.59h-3.59zM1609.48 691.36h14.34v3.59h-14.34zM1505.50 694.94h3.59v3.59h-3.59zM1512.67 694.94h10.76v3.59h-10.76zM1527.01 694.94h3.59v3.59h-3.59zM1534.18 694.94h7.17v3.59h-7.17zM1552.11 694.94h3.59v3.59h-3.59zM1566.45 694.94h17.93v3.59h-17.93zM1591.55 694.94h3.59v3.59h-3.59zM1598.72 694.94h7.17v3.59h-7.17zM1616.65 694.94h10.76v3.59h-10.76zM1638.16 694.94h10.76v3.59h-10.76zM1505.50 698.53h3.59v3.59h-3.59zM1527.01 698.53h3.59v3.59h-3.59zM1537.77 698.53h7.17v3.59h-7.17zM1548.52 698.53h3.59v3.59h-3.59zM1555.70 698.53h7.17v3.59h-7.17zM1577.21 698.53h3.59v3.59h-3.59zM1587.96 698.53h3.59v3.59h-3.59zM1595.13 698.53h3.59v3.59h-3.59zM1605.89 698.53h7.17v3.59h-7.17zM1620.23 698.53h7.17v3.59h-7.17zM1630.99 698.53h3.59v3.59h-3.59zM1638.16 698.53h10.76v3.59h-10.76zM1505.50 702.11h25.10v3.59h-25.10zM1534.18 702.11h3.59v3.59h-3.59zM1552.11 702.11h7.17v3.59h-7.17zM1570.04 702.11h3.59v3.59h-3.59zM1587.96 702.11h7.17v3.59h-7.17zM1598.72 702.11h3.59v3.59h-3.59zM1616.65 702.11h14.34v3.59h-14.34zM1641.74 702.11h3.59v3.59h-3.59z" fill="#000"/><path d="M1702.50 558.70h27.81v3.97h-27.81zM1742.23 558.70h11.92v3.97h-11.92zM1762.09 558.70h3.97v3.97h-3.97zM1781.96 558.70h7.95v3.97h-7.95zM1793.88 558.70h23.84v3.97h-23.84zM1821.69 558.70h27.81v3.97h-27.81zM1702.50 562.67h3.97v3.97h-3.97zM1726.34 562.67h3.97v3.97h-3.97zM1734.28 562.67h3.97v3.97h-3.97zM1742.23 562.67h3.97v3.97h-3.97zM1754.15 562.67h7.95v3.97h-7.95zM1766.07 562.67h3.97v3.97h-3.97zM1774.01 562.67h7.95v3.97h-7.95zM1789.91 562.67h11.92v3.97h-11.92zM1809.77 562.67h7.95v3.97h-7.95zM1821.69 562.67h3.97v3.97h-3.97zM1845.53 562.67h3.97v3.97h-3.97zM1702.50 566.65h3.97v3.97h-3.97zM1710.45 566.65h11.92v3.97h-11.92zM1726.34 566.65h3.97v3.97h-3.97zM1734.28 566.65h3.97v3.97h-3.97zM1742.23 566.65h7.95v3.97h-7.95zM1758.12 566.65h3.97v3.97h-3.97zM1766.07 566.65h7.95v3.97h-7.95zM1777.99 566.65h15.89v3.97h-15.89zM1797.85 566.65h3.97v3.97h-3.97zM1805.80 566.65h7.95v3.97h-7.95zM1821.69 566.65h3.97v3.97h-3.97zM1829.64 566.65h11.92v3.97h-11.92zM1845.53 566.65h3.97v3.97h-3.97zM1702.50 570.62h3.97v3.97h-3.97zM1710.45 570.62h11.92v3.97h-11.92zM1726.34 570.62h3.97v3.97h-3.97zM1734.28 570.62h7.95v3.97h-7.95zM1746.20 570.62h3.97v3.97h-3.97zM1754.15 570.62h3.97v3.97h-3.97zM1766.07 570.62h7.95v3.97h-7.95zM1777.99 570.62h7.95v3.97h-7.95zM1797.85 570.62h3.97v3.97h-3.97zM1805.80 570.62h11.92v3.97h-11.92zM1821.69 570.62h3.97v3.97h-3.97zM1829.64 570.62h11.92v3.97h-11.92zM1845.53 570.62h3.97v3.97h-3.97zM1702.50 574.59h3.97v3.97h-3.97zM1710.45 574.59h11.92v3.97h-11.92zM1726.34 574.59h3.97v3.97h-3.97zM1742.23 574.59h3.97v3.97h-3.97zM1750.18 574.59h3.97v3.97h-3.97zM1758.12 574.59h3.97v3.97h-3.97zM1766.07 574.59h3.97v3.97h-3.97zM1797.85 574.59h3.97v3.97h-3.97zM1813.74 574.59h3.97v3.97h-3.97zM1821.69 574.59h3.97v3.97h-3.97zM1829.64 574.59h11.92v3.97h-11.92zM1845.53 574.59h3.97v3.97h-3.97zM1702.50 578.56h3.97v3.97h-3.97zM1726.34 578.56h3.97v3.97h-3.97zM1738.26 578.56h3.97v3.97h-3.97zM1746.20 578.56h3.97v3.97h-3.97zM1754.15 578.56h7.95v3.97h-7.95zM1766.07 578.56h3.97v3.97h-3.97zM1777.99 578.56h11.92v3.97h-11.92zM1793.88 578.56h7.95v3.97h-7.95zM1809.77 578.56h3.97v3.97h-3.97zM1821.69 578.56h3.97v3.97h-3.97zM1845.53 578.56h3.97v3.97h-3.97zM1702.50 582.54h27.81v3.97h-27.81zM1734.28 582.54h23.84v3.97h-23.84zM1762.09 582.54h7.95v3.97h-7.95zM1777.99 582.54h11.92v3.97h-11.92zM1793.88 582.54h3.97v3.97h-3.97zM1805.80 582.54h3.97v3.97h-3.97zM1813.74 582.54h3.97v3.97h-3.97zM1821.69 582.54h27.81v3.97h-27.81zM1734.28 586.51h11.92v3.97h-11.92zM1750.18 586.51h11.92v3.97h-11.92zM1777.99 586.51h3.97v3.97h-3.97zM1789.91 586.51h3.97v3.97h-3.97zM1801.82 586.51h7.95v3.97h-7.95zM1718.39 590.48h3.97v3.97h-3.97zM1742.23 590.48h3.97v3.97h-3.97zM1754.15 590.48h11.92v3.97h-11.92zM1774.01 590.48h7.95v3.97h-7.95zM1785.93 590.48h3.97v3.97h-3.97zM1793.88 590.48h7.95v3.97h-7.95zM1805.80 590.48h7.95v3.97h-7.95zM1833.61 590.48h3.97v3.97h-3.97zM1841.55 590.48h7.95v3.97h-7.95zM1706.47 594.46h3.97v3.97h-3.97zM1730.31 594.46h7.95v3.97h-7.95zM1746.20 594.46h3.97v3.97h-3.97zM1766.07 594.46h3.97v3.97h-3.97zM1781.96 594.46h3.97v3.97h-3.97zM1793.88 594.46h3.97v3.97h-3.97zM1805.80 594.46h3.97v3.97h-3.97zM1813.74 594.46h3.97v3.97h-3.97zM1821.69 594.46h3.97v3.97h-3.97zM1833.61 594.46h15.89v3.97h-15.89zM1710.45 598.43h11.92v3.97h-11.92zM1730.31 598.43h3.97v3.97h-3.97zM1738.26 598.43h11.92v3.97h-11.92zM1754.15 598.43h7.95v3.97h-7.95zM1766.07 598.43h3.97v3.97h-3.97zM1774.01 598.43h3.97v3.97h-3.97zM1781.96 598.43h7.95v3.97h-7.95zM1793.88 598.43h11.92v3.97h-11.92zM1809.77 598.43h7.95v3.97h-7.95zM1841.55 598.43h3.97v3.97h-3.97zM1710.45 602.40h7.95v3.97h-7.95zM1722.36 602.40h3.97v3.97h-3.97zM1734.28 602.40h7.95v3.97h-7.95zM1746.20 602.40h7.95v3.97h-7.95zM1758.12 602.40h3.97v3.97h-3.97zM1766.07 602.40h7.95v3.97h-7.95zM1777.99 602.40h7.95v3.97h-7.95zM1797.85 602.40h3.97v3.97h-3.97zM1817.72 602.40h15.89v3.97h-15.89zM1845.53 602.40h3.97v3.97h-3.97zM1702.50 606.38h7.95v3.97h-7.95zM1722.36 606.38h7.95v3.97h-7.95zM1734.28 606.38h3.97v3.97h-3.97zM1742.23 606.38h7.95v3.97h-7.95zM1754.15 606.38h3.97v3.97h-3.97zM1762.09 606.38h3.97v3.97h-3.97zM1774.01 606.38h7.95v3.97h-7.95zM1785.93 606.38h11.92v3.97h-11.92zM1801.82 606.38h3.97v3.97h-3.97zM1825.66 606.38h3.97v3.97h-3.97zM1845.53 606.38h3.97v3.97h-3.97zM1718.39 610.35h3.97v3.97h-3.97zM1742.23 610.35h3.97v3.97h-3.97zM1750.18 610.35h19.86v3.97h-19.86zM1777.99 610.35h3.97v3.97h-3.97zM1789.91 610.35h3.97v3.97h-3.97zM1805.80 610.35h3.97v3.97h-3.97zM1829.64 610.35h3.97v3.97h-3.97zM1841.55 610.35h7.95v3.97h-7.95zM1702.50 614.32h19.86v3.97h-19.86zM1754.15 614.32h3.97v3.97h-3.97zM1793.88 614.32h3.97v3.97h-3.97zM1801.82 614.32h3.97v3.97h-3.97zM1813.74 614.32h7.95v3.97h-7.95zM1829.64 614.32h3.97v3.97h-3.97zM1837.58 614.32h11.92v3.97h-11.92zM1702.50 618.29h7.95v3.97h-7.95zM1714.42 618.29h3.97v3.97h-3.97zM1726.34 618.29h3.97v3.97h-3.97zM1738.26 618.29h3.97v3.97h-3.97zM1746.20 618.29h7.95v3.97h-7.95zM1797.85 618.29h11.92v3.97h-11.92zM1813.74 618.29h7.95v3.97h-7.95zM1825.66 618.29h7.95v3.97h-7.95zM1837.58 618.29h3.97v3.97h-3.97zM1714.42 622.27h7.95v3.97h-7.95zM1734.28 622.27h7.95v3.97h-7.95zM1793.88 622.27h3.97v3.97h-3.97zM1801.82 622.27h3.97v3.97h-3.97zM1809.77 622.27h7.95v3.97h-7.95zM1829.64 622.27h15.89v3.97h-15.89zM1706.47 626.24h7.95v3.97h-7.95zM1726.34 626.24h11.92v3.97h-11.92zM1742.23 626.24h3.97v3.97h-3.97zM1754.15 626.24h3.97v3.97h-3.97zM1797.85 626.24h3.97v3.97h-3.97zM1805.80 626.24h3.97v3.97h-3.97zM1813.74 626.24h7.95v3.97h-7.95zM1825.66 626.24h7.95v3.97h-7.95zM1841.55 626.24h7.95v3.97h-7.95zM1702.50 630.21h3.97v3.97h-3.97zM1710.45 630.21h7.95v3.97h-7.95zM1738.26 630.21h3.97v3.97h-3.97zM1746.20 630.21h11.92v3.97h-11.92zM1813.74 630.21h3.97v3.97h-3.97zM1825.66 630.21h7.95v3.97h-7.95zM1710.45 634.19h3.97v3.97h-3.97zM1722.36 634.19h7.95v3.97h-7.95zM1738.26 634.19h3.97v3.97h-3.97zM1746.20 634.19h3.97v3.97h-3.97zM1793.88 634.19h3.97v3.97h-3.97zM1813.74 634.19h3.97v3.97h-3.97zM1714.42 638.16h11.92v3.97h-11.92zM1734.28 638.16h19.86v3.97h-19.86zM1797.85 638.16h19.86v3.97h-19.86zM1825.66 638.16h15.89v3.97h-15.89zM1845.53 638.16h3.97v3.97h-3.97zM1710.45 642.13h7.95v3.97h-7.95zM1726.34 642.13h3.97v3.97h-3.97zM1738.26 642.13h11.92v3.97h-11.92zM1793.88 642.13h3.97v3.97h-3.97zM1809.77 642.13h15.89v3.97h-15.89zM1841.55 642.13h3.97v3.97h-3.97zM1702.50 646.11h3.97v3.97h-3.97zM1710.45 646.11h3.97v3.97h-3.97zM1726.34 646.11h7.95v3.97h-7.95zM1738.26 646.11h11.92v3.97h-11.92zM1797.85 646.11h3.97v3.97h-3.97zM1805.80 646.11h19.86v3.97h-19.86zM1829.64 646.11h3.97v3.97h-3.97zM1837.58 646.11h11.92v3.97h-11.92zM1714.42 650.08h7.95v3.97h-7.95zM1726.34 650.08h3.97v3.97h-3.97zM1734.28 650.08h7.95v3.97h-7.95zM1750.18 650.08h3.97v3.97h-3.97zM1758.12 650.08h7.95v3.97h-7.95zM1770.04 650.08h11.92v3.97h-11.92zM1785.93 650.08h7.95v3.97h-7.95zM1797.85 650.08h3.97v3.97h-3.97zM1813.74 650.08h3.97v3.97h-3.97zM1821.69 650.08h11.92v3.97h-11.92zM1841.55 650.08h7.95v3.97h-7.95zM1710.45 654.05h23.84v3.97h-23.84zM1738.26 654.05h3.97v3.97h-3.97zM1758.12 654.05h19.86v3.97h-19.86zM1797.85 654.05h11.92v3.97h-11.92zM1813.74 654.05h7.95v3.97h-7.95zM1837.58 654.05h3.97v3.97h-3.97zM1706.47 658.02h3.97v3.97h-3.97zM1714.42 658.02h3.97v3.97h-3.97zM1738.26 658.02h3.97v3.97h-3.97zM1750.18 658.02h11.92v3.97h-11.92zM1770.04 658.02h3.97v3.97h-3.97zM1777.99 658.02h11.92v3.97h-11.92zM1793.88 658.02h3.97v3.97h-3.97zM1813.74 658.02h3.97v3.97h-3.97zM1833.61 658.02h3.97v3.97h-3.97zM1841.55 658.02h3.97v3.97h-3.97zM1702.50 662.00h3.97v3.97h-3.97zM1714.42 662.00h3.97v3.97h-3.97zM1722.36 662.00h11.92v3.97h-11.92zM1746.20 662.00h3.97v3.97h-3.97zM1758.12 662.00h3.97v3.97h-3.97zM1770.04 662.00h19.86v3.97h-19.86zM1793.88 662.00h3.97v3.97h-3.97zM1801.82 662.00h3.97v3.97h-3.97zM1809.77 662.00h3.97v3.97h-3.97zM1817.72 662.00h3.97v3.97h-3.97zM1825.66 662.00h3.97v3.97h-3.97zM1837.58 662.00h7.95v3.97h-7.95zM1714.42 665.97h3.97v3.97h-3.97zM1730.31 665.97h7.95v3.97h-7.95zM1754.15 665.97h3.97v3.97h-3.97zM1762.09 665.97h7.95v3.97h-7.95zM1789.91 665.97h3.97v3.97h-3.97zM1797.85 665.97h11.92v3.97h-11.92zM1813.74 665.97h7.95v3.97h-7.95zM1829.64 665.97h19.86v3.97h-19.86zM1718.39 669.94h3.97v3.97h-3.97zM1726.34 669.94h3.97v3.97h-3.97zM1742.23 669.94h3.97v3.97h-3.97zM1750.18 669.94h3.97v3.97h-3.97zM1762.09 669.94h19.86v3.97h-19.86zM1789.91 669.94h7.95v3.97h-7.95zM1801.82 669.94h7.95v3.97h-7.95zM1813.74 669.94h27.81v3.97h-27.81zM1738.26 673.92h3.97v3.97h-3.97zM1746.20 673.92h7.95v3.97h-7.95zM1758.12 673.92h3.97v3.97h-3.97zM1774.01 673.92h3.97v3.97h-3.97zM1785.93 673.92h15.89v3.97h-15.89zM1805.80 673.92h11.92v3.97h-11.92zM1829.64 673.92h3.97v3.97h-3.97zM1841.55 673.92h7.95v3.97h-7.95zM1702.50 677.89h27.81v3.97h-27.81zM1738.26 677.89h3.97v3.97h-3.97zM1746.20 677.89h7.95v3.97h-7.95zM1758.12 677.89h7.95v3.97h-7.95zM1770.04 677.89h7.95v3.97h-7.95zM1781.96 677.89h3.97v3.97h-3.97zM1793.88 677.89h7.95v3.97h-7.95zM1805.80 677.89h3.97v3.97h-3.97zM1813.74 677.89h3.97v3.97h-3.97zM1821.69 677.89h3.97v3.97h-3.97zM1829.64 677.89h3.97v3.97h-3.97zM1702.50 681.86h3.97v3.97h-3.97zM1726.34 681.86h3.97v3.97h-3.97zM1734.28 681.86h7.95v3.97h-7.95zM1754.15 681.86h11.92v3.97h-11.92zM1770.04 681.86h7.95v3.97h-7.95zM1793.88 681.86h23.84v3.97h-23.84zM1829.64 681.86h3.97v3.97h-3.97zM1845.53 681.86h3.97v3.97h-3.97zM1702.50 685.84h3.97v3.97h-3.97zM1710.45 685.84h11.92v3.97h-11.92zM1726.34 685.84h3.97v3.97h-3.97zM1734.28 685.84h3.97v3.97h-3.97zM1742.23 685.84h11.92v3.97h-11.92zM1766.07 685.84h15.89v3.97h-15.89zM1785.93 685.84h7.95v3.97h-7.95zM1801.82 685.84h7.95v3.97h-7.95zM1813.74 685.84h35.76v3.97h-35.76zM1702.50 689.81h3.97v3.97h-3.97zM1710.45 689.81h11.92v3.97h-11.92zM1726.34 689.81h3.97v3.97h-3.97zM1738.26 689.81h7.95v3.97h-7.95zM1754.15 689.81h7.95v3.97h-7.95zM1766.07 689.81h7.95v3.97h-7.95zM1789.91 689.81h7.95v3.97h-7.95zM1801.82 689.81h3.97v3.97h-3.97zM1809.77 689.81h11.92v3.97h-11.92zM1825.66 689.81h23.84v3.97h-23.84zM1702.50 693.78h3.97v3.97h-3.97zM1710.45 693.78h11.92v3.97h-11.92zM1726.34 693.78h3.97v3.97h-3.97zM1734.28 693.78h19.86v3.97h-19.86zM1762.09 693.78h11.92v3.97h-11.92zM1777.99 693.78h3.97v3.97h-3.97zM1793.88 693.78h15.89v3.97h-15.89zM1813.74 693.78h3.97v3.97h-3.97zM1825.66 693.78h19.86v3.97h-19.86zM1702.50 697.75h3.97v3.97h-3.97zM1726.34 697.75h3.97v3.97h-3.97zM1738.26 697.75h11.92v3.97h-11.92zM1754.15 697.75h7.95v3.97h-7.95zM1766.07 697.75h23.84v3.97h-23.84zM1805.80 697.75h3.97v3.97h-3.97zM1817.72 697.75h3.97v3.97h-3.97zM1837.58 697.75h3.97v3.97h-3.97zM1845.53 697.75h3.97v3.97h-3.97zM1702.50 701.73h27.81v3.97h-27.81zM1734.28 701.73h11.92v3.97h-11.92zM1750.18 701.73h19.86v3.97h-19.86zM1785.93 701.73h27.81v3.97h-27.81zM1817.72 701.73h19.86v3.97h-19.86zM1845.53 701.73h3.97v3.97h-3.97z" fill="#000"/><rect x="1561" y="618" width="34" height="34" rx="5" fill="#1677ff" stroke="#fff" stroke-width="2"/><text x="1578" y="644" font-size="25" fill="#fff" text-anchor="middle" font-weight="bold">支</text><rect x="1760" y="616" width="34" height="34" rx="6" fill="#2aae3a" stroke="#fff" stroke-width="2"/><ellipse cx="1773" cy="630" rx="8.500" ry="7" fill="#fff"/><ellipse cx="1783" cy="637.500" rx="7" ry="5.800" fill="#fff" stroke="#2aae3a" stroke-width="1"/><circle cx="1770" cy="628" r="1" fill="#2aae3a"/><circle cx="1776" cy="628" r="1" fill="#2aae3a"/><circle cx="1780.500" cy="636" r=".9" fill="#2aae3a"/><circle cx="1785.500" cy="636" r=".9" fill="#2aae3a"/><text x="1580" y="730" font-size="9.500" fill="#333" text-anchor="middle" stroke="#333" stroke-width=".25" letter-spacing=".1">“左手自研，右手开源，您的赞赏是我们</text><text x="1580" y="745" font-size="9.500" fill="#333" text-anchor="middle" stroke="#333" stroke-width=".25" letter-spacing=".1">前进的动力！(^ - ^) ”</text><text x="1776" y="730" font-size="9.500" fill="#333" text-anchor="middle" stroke="#333" stroke-width=".25" letter-spacing=".1">“左手自研，右手开源，您的赞赏是我们</text><text x="1776" y="745" font-size="9.500" fill="#333" text-anchor="middle" stroke="#333" stroke-width=".25" letter-spacing=".1">前进的动力！(^ - ^) ”</text><path d="M1482 752Q1580 764 1678 752V787H1482Z" fill="#1a6af0"/><path d="M1678 752Q1776 764 1874 752V787H1678Z" fill="#22ab38"/><text x="1584" y="776.500" font-size="12" fill="#dfeaff" text-anchor="middle" font-weight="bold" letter-spacing="2">支付宝赞赏</text><text x="1776" y="776.500" font-size="12" fill="#dff5e2" text-anchor="middle" font-weight="bold" letter-spacing="2">微信赞赏</text></svg>
<div class="card" style="left:1345px;top:820px;width:555px;height:331px"></div>
<div class="t" style="left:1357px;top:829.0px;height:26px;line-height:26px;font-size:18px;color:#333;font-weight:bold;">最活跃员工</div>
<div class="t" style="left:1452px;top:831.0px;height:22px;line-height:22px;font-size:14px;color:#999;">最近30天前十的活跃度</div>
<div class="hl" style="left:1345px;top:862px;width:555px;background:#f4f4f4"></div>
<svg style="left:0;top:0" width="1920" height="1886" viewBox="0 0 1920 1886" font-family="Liberation Sans, sans-serif"><rect x="1399.5" y="880.3" width="25" height="14" rx="3.500" fill="#5470c6"/><text x="1429.5" y="891.5999999999999" font-size="12" fill="#333">素还真</text><rect x="1475.5" y="880.3" width="25" height="14" rx="3.500" fill="#91cc75"/><text x="1505.5" y="891.5999999999999" font-size="12" fill="#333">叶小钗</text><rect x="1551.5" y="880.3" width="25" height="14" rx="3.500" fill="#fac858"/><text x="1581.5" y="891.5999999999999" font-size="12" fill="#333">风采铃</text><rect x="1627.5" y="880.3" width="25" height="14" rx="3.500" fill="#ee6666"/><text x="1657.5" y="891.5999999999999" font-size="12" fill="#333">玉辞心</text><rect x="1703.5" y="880.3" width="25" height="14" rx="3.500" fill="#73c0de"/><text x="1733.5" y="891.5999999999999" font-size="12" fill="#333">秦假仙</text><rect x="1779.5" y="880.3" width="25" height="14" rx="3.500" fill="#3ba272"/><text x="1809.5" y="891.5999999999999" font-size="12" fill="#333">一页书</text><rect x="1399.5" y="904.8" width="25" height="14" rx="3.500" fill="#fc8452"/><text x="1429.5" y="916.0999999999999" font-size="12" fill="#333">孤星泪</text><rect x="1475.5" y="904.8" width="25" height="14" rx="3.500" fill="#9a60b4"/><text x="1505.5" y="916.0999999999999" font-size="12" fill="#333">一直</text><rect x="1539.5" y="904.8" width="25" height="14" rx="3.500" fill="#ea7ccc"/><text x="1569.5" y="916.0999999999999" font-size="12" fill="#333">佛剑分说</text><rect x="1627.5" y="904.8" width="25" height="14" rx="3.500" fill="#5470c6"/><text x="1657.5" y="916.0999999999999" font-size="12" fill="#333">张三</text><path d="M1607.2 951.5L1622.2 951.5L1622.2 970.0" stroke="#5470c6" stroke-width="1" fill="none"/><path d="M1563.4 967.7L1621.5 966.0" stroke="#ea7ccc" stroke-width="1" fill="none"/><path d="M1547.4 984.1L1620.0 966.6" stroke="#9a60b4" stroke-width="1" fill="none"/><path d="M1538.0 999.9L1619.0 967.5" stroke="#fc8452" stroke-width="1" fill="none"/><path d="M1532.5 1015.9L1618.0 967.8" stroke="#3ba272" stroke-width="1" fill="none"/><path d="M1530.3 1032.0L1559.5 1009.7L1570.0 1001.0" stroke="#73c0de" stroke-width="1" fill="none"/><path d="M1531.0 1048.0L1556.6 1020.3L1562.0 1014.0" stroke="#ee6666" stroke-width="1" fill="none"/><path d="M1532.2 1064.5L1555.8 1022.5L1559.0 1017.0" stroke="#fac858" stroke-width="1" fill="none"/><path d="M1534.3 1080.8L1555.8 1024.0L1558.0 1019.0" stroke="#91cc75" stroke-width="1" fill="none"/><path d="M1660.0 1080.0L1674.0 1097.2L1688.8 1097.2" stroke="#5470c6" stroke-width="1" fill="none"/><path d="M1622.3 1033.8L1622.30 966.80A67 67 0 1 1 1556.69 1020.21Z" fill="#5470c6"/><path d="M1622.3 1033.8L1556.69 1020.21A67 67 0 0 1 1572.28 989.23Z" fill="#91cc75"/><path d="M1622.3 1033.8L1572.28 989.23A67 67 0 0 1 1596.88 971.81Z" fill="#fac858"/><path d="M1622.3 1033.8L1596.88 971.81A67 67 0 0 1 1611.24 967.72Z" fill="#ee6666"/><path d="M1622.3 1033.8L1611.24 967.72A67 67 0 0 1 1619.67 966.85Z" fill="#73c0de"/><path d="M1622.3 1033.8L1619.67 966.85A67 67 0 0 1 1620.66 966.82Z" fill="#3ba272"/><path d="M1622.3 1033.8L1620.66 966.82A67 67 0 0 1 1621.36 966.81Z" fill="#fc8452"/><path d="M1622.3 1033.8L1621.36 966.81A67 67 0 0 1 1621.72 966.80Z" fill="#9a60b4"/><path d="M1622.3 1033.8L1621.72 966.80A67 67 0 0 1 1622.01 966.80Z" fill="#ea7ccc"/><path d="M1622.3 1033.8L1622.01 966.80A67 67 0 0 1 1622.30 966.80Z" fill="#5470c6"/><text x="1602" y="955.6" font-size="12" fill="#333" text-anchor="end">张三</text><text x="1558" y="971.9" font-size="12" fill="#333" text-anchor="end">佛剑分说</text><text x="1542.5" y="988.1" font-size="12" fill="#333" text-anchor="end">一直</text><text x="1532.5" y="1003.7" font-size="12" fill="#333" text-anchor="end">孤星泪</text><text x="1527" y="1019.8" font-size="12" fill="#333" text-anchor="end">一页书</text><text x="1525" y="1036.1" font-size="12" fill="#333" text-anchor="end">秦假仙</text><text x="1525.5" y="1052.5" font-size="12" fill="#333" text-anchor="end">玉辞心</text><text x="1526.7" y="1068.5" font-size="12" fill="#333" text-anchor="end">风采铃</text><text x="1529" y="1084.6" font-size="12" fill="#333" text-anchor="end">叶小钗</text><text x="1694.500" y="1101.700" font-size="12" fill="#333">素还真</text></svg>
<div class="card" style="left:1345px;top:1163px;width:555px;height:683px"></div>
<div class="t" style="left:1357px;top:1172.0px;height:26px;line-height:26px;font-size:18px;color:#333;font-weight:bold;">员工动态</div>
<div class="t" style="left:1860px;top:1174.0px;height:22px;line-height:22px;font-size:14px;color:#2277d6;">更多</div>
<div class="hl" style="left:1345px;top:1205px;width:555px;background:#f4f4f4"></div>
<div class="a" style="left:1370px;top:1233px;width:1px;height:575px;background:#e9e9e9;"></div>
<div class="a" style="left:1363px;top:1218px;width:15px;height:15px;border-radius:50%;border:1.300px solid #6dbb8a;background:#fff"></div>
<div class="t" style="left:1390px;top:1215.5px;height:22px;line-height:22px;font-size:14px;color:#666;">3分钟前，一页书新增了任务</div>
<div class="a" style="left:1363px;top:1249px;width:15px;height:15px;border-radius:50%;border:1.300px solid #6dbb8a;background:#fff"></div>
<div class="t" style="left:1390px;top:1246.5px;height:22px;line-height:22px;font-size:14px;color:#666;">3分钟前，一页书新增了任务</div>
<div class="a" style="left:1363px;top:1280px;width:15px;height:15px;border-radius:50%;border:1.300px solid #6dbb8a;background:#fff"></div>
<div class="t" style="left:1390px;top:1277.5px;height:22px;line-height:22px;font-size:14px;color:#666;">4分钟前，一页书编辑了任务</div>
<div class="a" style="left:1363px;top:1311px;width:15px;height:15px;border-radius:50%;border:1.300px solid #6dbb8a;background:#fff"></div>
<div class="t" style="left:1390px;top:1308.5px;height:22px;line-height:22px;font-size:14px;color:#666;">5分钟前，一页书新增了任务</div>
<div class="a" style="left:1363px;top:1342px;width:15px;height:15px;border-radius:50%;border:1.300px solid #6dbb8a;background:#fff"></div>
<div class="t" style="left:1390px;top:1339.5px;height:22px;line-height:22px;font-size:14px;color:#666;">12分钟前，素还真登录了系统</div>
<div class="a" style="left:1363px;top:1373px;width:15px;height:15px;border-radius:50%;border:1.300px solid #6dbb8a;background:#fff"></div>
<div class="t" style="left:1390px;top:1370.5px;height:22px;line-height:22px;font-size:14px;color:#666;">12分钟前，一页书登录了系统</div>
<div class="a" style="left:1363px;top:1404px;width:15px;height:15px;border-radius:50%;border:1.300px solid #6dbb8a;background:#fff"></div>
<div class="t" style="left:1390px;top:1401.5px;height:22px;line-height:22px;font-size:14px;color:#666;">12分钟前，孤星泪登录了系统</div>
<div class="a" style="left:1363px;top:1435px;width:15px;height:15px;border-radius:50%;border:1.300px solid #6dbb8a;background:#fff"></div>
<div class="t" style="left:1390px;top:1432.5px;height:22px;line-height:22px;font-size:14px;color:#666;">15分钟前，素还真新增了办公审批</div>
<div class="a" style="left:1363px;top:1466px;width:15px;height:15px;border-radius:50%;border:1.300px solid #6dbb8a;background:#fff"></div>
<div class="t" style="left:1390px;top:1463.5px;height:22px;line-height:22px;font-size:14px;color:#666;">16分钟前，素还真上传了文件</div>
<div class="a" style="left:1363px;top:1497px;width:15px;height:15px;border-radius:50%;border:1.300px solid #6dbb8a;background:#fff"></div>
<div class="t" style="left:1390px;top:1494.5px;height:22px;line-height:22px;font-size:14px;color:#666;">16分钟前，素还真登录了系统</div>
<div class="a" style="left:1363px;top:1528px;width:15px;height:15px;border-radius:50%;border:1.300px solid #6dbb8a;background:#fff"></div>
<div class="t" style="left:1390px;top:1525.5px;height:22px;line-height:22px;font-size:14px;color:#666;">18分钟前，素还真登录了系统</div>
<div class="a" style="left:1363px;top:1559px;width:15px;height:15px;border-radius:50%;border:1.300px solid #6dbb8a;background:#fff"></div>
<div class="t" style="left:1390px;top:1556.5px;height:22px;line-height:22px;font-size:14px;color:#666;">19分钟前，素还真登录了系统</div>
<div class="a" style="left:1363px;top:1590px;width:15px;height:15px;border-radius:50%;border:1.300px solid #6dbb8a;background:#fff"></div>
<div class="t" style="left:1390px;top:1587.5px;height:22px;line-height:22px;font-size:14px;color:#666;">20分钟前，素还真登录了系统</div>
<div class="a" style="left:1363px;top:1621px;width:15px;height:15px;border-radius:50%;border:1.300px solid #6dbb8a;background:#fff"></div>
<div class="t" style="left:1390px;top:1618.5px;height:22px;line-height:22px;font-size:14px;color:#666;">23分钟前，超级员工登录了系统</div>
<div class="a" style="left:1363px;top:1652px;width:15px;height:15px;border-radius:50%;border:1.300px solid #6dbb8a;background:#fff"></div>
<div class="t" style="left:1390px;top:1649.5px;height:22px;line-height:22px;font-size:14px;color:#666;">25分钟前，素还真登录了系统</div>
<div class="a" style="left:1363px;top:1683px;width:15px;height:15px;border-radius:50%;border:1.300px solid #6dbb8a;background:#fff"></div>
<div class="t" style="left:1390px;top:1680.5px;height:22px;line-height:22px;font-size:14px;color:#666;">26分钟前，素还真登录了系统</div>
<div class="a" style="left:1363px;top:1714px;width:15px;height:15px;border-radius:50%;border:1.300px solid #6dbb8a;background:#fff"></div>
<div class="t" style="left:1390px;top:1711.5px;height:22px;line-height:22px;font-size:14px;color:#666;">40分钟前，叶小钗新增了到账记录</div>
<div class="a" style="left:1363px;top:1745px;width:15px;height:15px;border-radius:50%;border:1.300px solid #6dbb8a;background:#fff"></div>
<div class="t" style="left:1390px;top:1742.5px;height:22px;line-height:22px;font-size:14px;color:#666;">47分钟前，素还真编辑了工作记录</div>
<div class="a" style="left:1363px;top:1776px;width:15px;height:15px;border-radius:50%;border:1.300px solid #6dbb8a;background:#fff"></div>
<div class="t" style="left:1390px;top:1773.5px;height:22px;line-height:22px;font-size:14px;color:#666;">49分钟前，素还真登录了系统</div>
<div class="a" style="left:1363px;top:1807px;width:15px;height:15px;border-radius:50%;border:1.300px solid #6dbb8a;background:#fff"></div>
<div class="t" style="left:1390px;top:1804.5px;height:22px;line-height:22px;font-size:14px;color:#666;">52分钟前，素还真登录了系统</div>
</body></html>
